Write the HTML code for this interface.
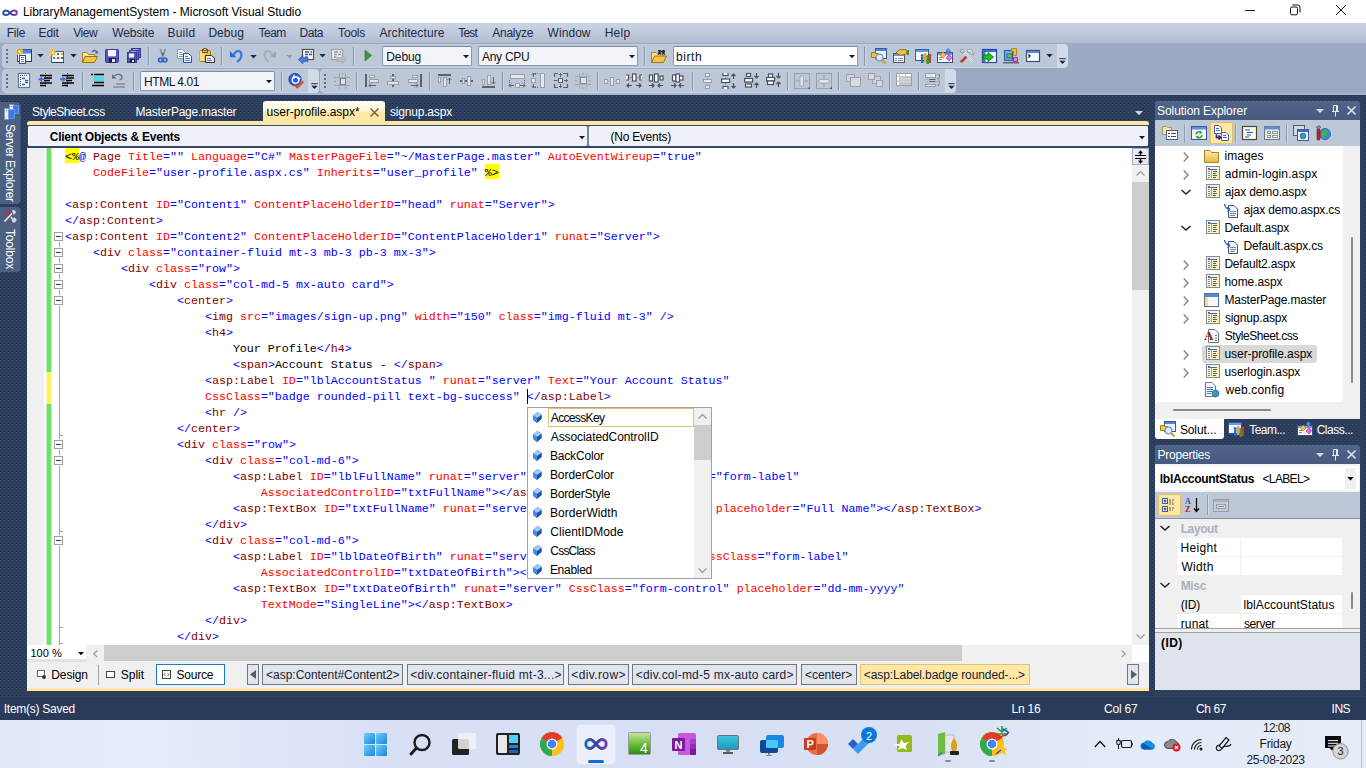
<!DOCTYPE html>
<html lang="en">
<head>
<meta charset="utf-8">
<title>LibraryManagementSystem - Microsoft Visual Studio</title>
<style>
html,body{margin:0;padding:0;}
body{width:1366px;height:768px;overflow:hidden;position:relative;background:#2b3b5a;font-family:"Liberation Sans",sans-serif;font-size:12px;line-height:16px;color:#000;}
div,span,svg,pre{position:absolute;box-sizing:border-box;}
span{white-space:pre;}
.t{font:12px/16px "Liberation Sans",sans-serif;color:#000;}
.w{color:#fff;}
.b{font-weight:bold !important;}
.i{overflow:visible;}

.m{font:12px/16px "Liberation Sans",sans-serif;color:#1b2a45;top:25px;}

.ts{background:#bcc7d8;border-radius:5px 0 0 5px;box-shadow:inset 0 1px 0 #c4cddd, inset 1px 0 0 #c4cddd, inset 0 -1px 0 #c9d2e2;}
.to{background:#d3dae7;border-radius:0 4px 4px 0;}
.cb{background:#f2f4f9;border:1px solid #8a96ad;border-top-color:#7d899f;border-radius:2px;}
.sep{width:1px;background:#8593ad;box-shadow:1px 0 0 #cfd7e4;}
.ct{font:12px/16px "Liberation Sans",sans-serif;color:#0c1222;}

.tab{font:12px/16px "Liberation Sans",sans-serif;color:#fff;top:104px;}
.c{font:11.667px/16px "Liberation Mono",monospace;letter-spacing:0;color:#000;left:65px;margin:0;white-space:pre;}
.c b{font-weight:normal;color:#0000ff;}
.c i{font-style:normal;color:#ff0000;}
.c u{text-decoration:none;color:#800000;}
.c s{text-decoration:none;color:#000;}
.ob{width:9px;height:9px;border:1px solid #a0a0a0;background:#fff;left:54px;}
.ob:after{content:"";position:absolute;left:1px;top:3px;width:5px;height:1px;background:#404040;}
.sb{background:#f0f0f0;}
.th{background:#cdcdcd;}
.vb{font:12px/16px "Liberation Sans",sans-serif;color:#000;top:667px;}
.bc{top:664px;height:21px;border:1px solid #70757f;background:#e1e5ee;font:12px/18px "Liberation Sans",sans-serif;color:#1a2133;padding:0 0 0 4px;white-space:pre;overflow:hidden;}
.ac li{position:absolute;left:22px;font:12px/16px "Liberation Sans",sans-serif;color:#000;white-space:pre;list-style:none;}
.ac ul{margin:0;padding:0;}

.pt{font:12px/16px "Liberation Sans",sans-serif;color:#fff;}
.tr{font:12px/16px "Liberation Sans",sans-serif;color:#000;}
.pg{font:12px/16px "Liberation Sans",sans-serif;color:#000;}

.st{font:12px/16px "Liberation Sans",sans-serif;color:#fff;top:701px;}
.ck{font:12px/16px "Liberation Sans",sans-serif;color:#1a1a1a;}
</style>
</head>
<body>
<!-- s_frame -->
<svg class="i" style="left:0;top:0" width="1366" height="768"><defs><pattern id="dots" width="4" height="4" patternUnits="userSpaceOnUse"><rect width="4" height="4" fill="#2c3c5b"/><rect x="0" y="0" width="1" height="1" fill="#3a4e70"/><rect x="2" y="2" width="1" height="1" fill="#3a4e70"/><rect x="2" y="1" width="1" height="1" fill="#273552"/><rect x="0" y="3" width="1" height="1" fill="#273552"/></pattern></defs><rect x="0" y="95" width="1366" height="625" fill="url(#dots)" shape-rendering="crispEdges"/></svg>
<div style="left:0px;top:0px;width:1366px;height:23px;background:#ffffff;"></div>
<svg class="i" style="left:2px;top:8px;" width="16" height="9" viewBox="0 0 16 9"><defs><linearGradient id="vsg" x1="0" x2="1"><stop offset="0" stop-color="#1c5fa8"/><stop offset=".5" stop-color="#3a3f9e"/><stop offset="1" stop-color="#7a3fb0"/></linearGradient></defs><path d="M8 4.800C6.500 3.100 5.300 2.500 4 2.500 2.300 2.500 1.200 3.500 1.200 4.800S2.300 7.100 4 7.100C5.300 7.100 6.500 6.500 8 4.800S10.700 2.500 12 2.500C13.700 2.500 14.800 3.500 14.800 4.800S13.700 7.100 12 7.100C10.700 7.100 9.500 6.500 8 4.800Z" fill="none" stroke="url(#vsg)" stroke-width="2"/></svg>
<span class="t" style="left:22.9px;top:4px;letter-spacing:-0.02px;color:#000;">LibraryManagementSystem - Microsoft Visual Studio</span>
<svg class="i" style="left:1238px;top:0px;" width="120" height="23" viewBox="0 0 120 23"><path d="M7.200 10.500H17" stroke="#111" stroke-width="1" fill="none"/><rect x="52.500" y="7" width="7" height="7.800" rx="1.600" stroke="#111" stroke-width="1" fill="none"/><path d="M54.500 5H59.800a2.200 2.200 0 0 1 2.200 2.200V12.500" stroke="#111" stroke-width="1" fill="none"/><path d="M98 5l10 10M108 5l-10 10" stroke="#111" stroke-width="1" fill="none"/></svg>
<div style="left:0px;top:23px;width:1366px;height:20px;background:linear-gradient(#cad3e3,#c3ccde 40%,#b8c3d7 75%,#b2bdd3);"></div>
<span class="m" style="left:6.7px;top:25px;letter-spacing:-0.20px;">File</span>
<span class="m" style="left:38.6px;top:25px;letter-spacing:-0.15px;">Edit</span>
<span class="m" style="left:73.3px;top:25px;letter-spacing:-0.46px;">View</span>
<span class="m" style="left:112.3px;top:25px;letter-spacing:-0.17px;">Website</span>
<span class="m" style="left:167.4px;top:25px;letter-spacing:0.27px;">Build</span>
<span class="m" style="left:208.4px;top:25px;letter-spacing:0.06px;">Debug</span>
<span class="m" style="left:258.4px;top:25px;letter-spacing:-0.46px;">Team</span>
<span class="m" style="left:299.6px;top:25px;letter-spacing:-0.47px;">Data</span>
<span class="m" style="left:338.1px;top:25px;letter-spacing:-0.19px;">Tools</span>
<span class="m" style="left:379.4px;top:25px;letter-spacing:0.09px;">Architecture</span>
<span class="m" style="left:458.2px;top:25px;letter-spacing:-0.77px;">Test</span>
<span class="m" style="left:492.3px;top:25px;letter-spacing:-0.26px;">Analyze</span>
<span class="m" style="left:547.6px;top:25px;letter-spacing:0.05px;">Window</span>
<span class="m" style="left:604.7px;top:25px;letter-spacing:0.24px;">Help</span>
<div style="left:0px;top:43px;width:1366px;height:52px;background:#9ba9c3;"></div>
<div style="left:0px;top:93px;width:1366px;height:2px;background:#a8b5cf;"></div>
<!-- s_toolbar -->
<div class="ts" style="left:2px;top:44px;width:1055px;height:24px;"></div>
<div class="to" style="left:1057px;top:44px;width:11px;height:24px;"></div>
<svg class="i" style="left:1059px;top:58px;" width="7" height="6" viewBox="0 0 7 6"><rect x="0.300" y="0.200" width="6.400" height="1" fill="#1b2a45"/><path d="M0.300 2.700H6.700L3.500 5.900Z" fill="#1b2a45"/></svg>
<svg class="i" style="left:6px;top:49px;" width="2" height="16" viewBox="0 0 2 16"><rect x="0" y="0" width="2" height="2" fill="#5d6c8a"/><rect x="0" y="4" width="2" height="2" fill="#5d6c8a"/><rect x="0" y="8" width="2" height="2" fill="#5d6c8a"/><rect x="0" y="12" width="2" height="2" fill="#5d6c8a"/></svg>
<svg class="i" style="left:16px;top:48px;" width="16" height="16" viewBox="0 0 16 16"><rect x="1.5" y="1.5" width="14" height="12" fill="#eef2fc" stroke="#3c4f7a" stroke-width="1"/><rect x="2" y="2" width="13" height="3" fill="#4c84e0"/><rect x="2" y="5" width="13" height="1" fill="#9cbcf0"/><path d="M15.500 2V13.500H2" fill="none" stroke="#2c3a58" stroke-width="1"/><rect x="3.5" y="7.5" width="6" height="8" fill="#ffffff" stroke="#3f5078" stroke-width="1"/><path d="M5 9.500H8M5 11.500H8M5 13.500H8" fill="none" stroke="#4a7fe0" stroke-width="1"/><rect x="0" y="0" width="7" height="7" fill="#f7dc6a" rx="1" opacity="0.550"/><path d="M3.5 0V7M0 3.5H7M1 1L6 6M6 1L1 6" fill="none" stroke="#e6b422" stroke-width="1"/><rect x="2.5" y="2.5" width="2" height="2" fill="#fffbe0"/></svg>
<svg class="i" style="left:37px;top:53.5px;" width="7" height="4" viewBox="0 0 7 4"><path d="M0.300 0H6.700L3.500 3.600Z" fill="#1b2a45"/></svg>
<svg class="i" style="left:49px;top:48px;" width="16" height="16" viewBox="0 0 16 16"><rect x="2.5" y="3.5" width="12" height="11" fill="#f6f8fd" stroke="#4a5878" stroke-width="1"/><rect x="3" y="14" width="12" height="1" fill="#2c3a58"/><rect x="8" y="5" width="2" height="2" fill="#5a5ad8"/><rect x="12" y="5" width="2" height="2" fill="#f0a020"/><rect x="4" y="9" width="2" height="2" fill="#2a8af0"/><rect x="8" y="9" width="2" height="2" fill="#e83020"/><rect x="12" y="9" width="2" height="2" fill="#18a028"/><rect x="0" y="1" width="7" height="7" fill="#f7dc6a" rx="1" opacity="0.550"/><path d="M3.5 1V8M0 4.5H7M1 2L6 7M6 2L1 7" fill="none" stroke="#e6b422" stroke-width="1"/><rect x="2.5" y="3.5" width="2" height="2" fill="#fffbe0"/></svg>
<svg class="i" style="left:70px;top:53.5px;" width="7" height="4" viewBox="0 0 7 4"><path d="M0.300 0H6.700L3.500 3.600Z" fill="#1b2a45"/></svg>
<svg class="i" style="left:82px;top:49px;" width="16" height="16" viewBox="0 0 16 16"><path d="M0.500 13.500V3.500H5L6.500 5.500H12.500V7.500" fill="#f9e39a" stroke="#a8842a" stroke-width="1"/><path d="M0.500 13.500L3 7.500H15.500L12.500 13.500Z" fill="#f3c445" stroke="#9a7218" stroke-width="1"/><path d="M10 3C11.500 0.800 14 1 15 3.500" fill="none" stroke="#3a66b0" stroke-width="1.3"/><path d="M15.800 1.500V4.500H12.800Z" fill="#3a66b0"/></svg>
<svg class="i" style="left:104px;top:48px;" width="16" height="16" viewBox="0 0 16 16"><rect x="1.5" y="1.5" width="13" height="13" fill="#5652c4" stroke="#3a3896" stroke-width="1" rx="1"/><rect x="4" y="2" width="8" height="6" fill="#f6f7ff"/><rect x="4" y="8" width="8" height="1" fill="#8a88e0"/><rect x="5" y="10" width="7" height="4.5" fill="#1c1c3c"/><rect x="8" y="11" width="3" height="3" fill="#e6e6f0"/></svg>
<svg class="i" style="left:126px;top:48px;" width="16" height="16" viewBox="0 0 16 16"><rect x="5.5" y="0.5" width="9" height="9" fill="#6a66d0" stroke="#3a3896" stroke-width="1"/><rect x="7" y="1.5" width="5" height="1.5" fill="#f0f0ff"/><rect x="3.5" y="2.5" width="9" height="9" fill="#6a66d0" stroke="#3a3896" stroke-width="1"/><rect x="5" y="3.5" width="5" height="1.5" fill="#f0f0ff"/><rect x="1.5" y="4.5" width="9" height="10" fill="#5652c4" stroke="#3a3896" stroke-width="1"/><rect x="3" y="5.5" width="5" height="4" fill="#f6f7ff"/><rect x="4" y="11" width="5" height="3.5" fill="#1c1c3c"/><rect x="6" y="12" width="2" height="2" fill="#e0e0ea"/></svg>
<div class="sep" style="left:148px;top:47px;height:18px"></div>
<svg class="i" style="left:154px;top:48px;" width="16" height="16" viewBox="0 0 16 16"><path d="M6.300 1L9.300 9.500M11.300 1L8.300 9.500" fill="none" stroke="#8a94a2" stroke-width="1.9"/><path d="M7.500 5L8.800 8.500 10 5Z" fill="#5a6270"/><circle cx="6.5" cy="12" r="1.9" fill="none" stroke="#2f66c8" stroke-width="1.7"/><circle cx="11" cy="12" r="1.9" fill="none" stroke="#2f66c8" stroke-width="1.7"/></svg>
<svg class="i" style="left:177px;top:48px;" width="16" height="16" viewBox="0 0 16 16"><path d="M0.500 1.500H5.500L8.500 4.500V10.500H0.500Z" fill="#ffffff" stroke="#8a9ab8" stroke-width="1"/><path d="M2 4.500H5M2 6.500H7M2 8.500H7" fill="none" stroke="#6aa0e8" stroke-width="1"/><path d="M6.500 5.500H11.500L14.500 8.500V14.500H6.500Z" fill="#ffffff" stroke="#2c4c9a" stroke-width="1"/><path d="M8 8.500H11M8 10.500H13M8 12.500H13" fill="none" stroke="#3a80e0" stroke-width="1"/></svg>
<svg class="i" style="left:199px;top:48px;" width="16" height="16" viewBox="0 0 16 16"><rect x="0.5" y="2.5" width="11" height="11" fill="#f0c040" stroke="#9a7418" stroke-width="1" rx="1"/><path d="M0.5 3H5V13H0.5Z" fill="#fbe08a" stroke="none" stroke-width="1"/><rect x="3.5" y="1.5" width="5" height="3" fill="#d8c080" stroke="#6e5a20" stroke-width="1"/><rect x="5" y="0.5" width="2" height="2" fill="#e8d8a0" stroke="#6e5a20" stroke-width="1"/><path d="M6.500 7.500H12.500L15.500 10V14.500H6.500Z" fill="#e8ecf4" stroke="#3a3028" stroke-width="1"/><path d="M8 10.500H12M8 12.500H13" fill="none" stroke="#6a7690" stroke-width="1"/></svg>
<div class="sep" style="left:221px;top:47px;height:18px"></div>
<svg class="i" style="left:229px;top:48px;" width="16" height="16" viewBox="0 0 16 16"><path d="M4.500 7.500C6 3.500 9.500 1.500 11.500 4 13.500 6.500 12 11 9 13.200" fill="none" stroke="#3a7ae8" stroke-width="2.3" stroke-linecap="round"/><path d="M1 3V9.300H7.300Z" fill="#2a68dc"/></svg>
<svg class="i" style="left:250.3px;top:54.5px;" width="7" height="4" viewBox="0 0 7 4"><path d="M0.300 0H6.700L3.500 3.600Z" fill="#1b2a45"/></svg>
<svg class="i" style="left:261px;top:48px;" width="16" height="16" viewBox="0 0 16 16"><path d="M11.500 7.500C10 3.500 6.500 1.500 4.500 4 2.500 6.500 4 11 7 13.200" fill="none" stroke="#aab0ba" stroke-width="2.3" stroke-linecap="round"/><path d="M15 3V9.300H8.700Z" fill="#a0a6b0"/></svg>
<svg class="i" style="left:285.7px;top:54.5px;" width="7" height="4" viewBox="0 0 7 4"><path d="M0.300 0H6.700L3.500 3.600Z" fill="#8f9aae"/></svg>
<svg class="i" style="left:298px;top:48px;" width="16" height="16" viewBox="0 0 16 16"><rect x="4.5" y="1.5" width="11" height="10" fill="#fffef2" stroke="#5a5040" stroke-width="1.2"/><path d="M7 4H11M12.500 4H14M7 6.500H10M11 6.500H14M7 9H9.500" fill="none" stroke="#2a48e8" stroke-width="1.4"/><path d="M0.300 11.500L5 7V9.500H10V13.500H5V16Z" fill="#3c7ae4" stroke="#2450b0" stroke-width="0.6"/></svg>
<svg class="i" style="left:318.7px;top:53.5px;" width="7" height="4" viewBox="0 0 7 4"><path d="M0.300 0H6.700L3.500 3.600Z" fill="#1b2a45"/></svg>
<svg class="i" style="left:331px;top:48px;" width="16" height="16" viewBox="0 0 16 16"><rect x="0.5" y="1.5" width="11" height="10" fill="#eceef0" stroke="#9a9ea6" stroke-width="1.2"/><path d="M3 4H7M8.500 4H10M3 6.500H6M7 6.500H10M3 9H5.500" fill="none" stroke="#8a8f98" stroke-width="1.4"/><path d="M15.700 11.500L11 7V9.500H6V13.500H11V16Z" fill="#b8bcc2" stroke="#9a9ea6" stroke-width="0.6"/></svg>
<div class="sep" style="left:353px;top:47px;height:18px"></div>
<svg class="i" style="left:360px;top:48px;" width="16" height="16" viewBox="0 0 16 16"><path d="M5 2L11.500 7.500 5 13Z" fill="#3a9a32" stroke="#2a7a22" stroke-width="0.6"/></svg>
<div class="cb" style="left:382px;top:46px;width:90px;height:20px;"></div><span class="ct" style="left:386.3px;top:49px;letter-spacing:-0.12px;">Debug</span><svg class="i" style="left:463px;top:55px;" width="6" height="3" viewBox="0 0 6 3"><path d="M0 0H6L3 3.300Z" fill="#10182c"/></svg>
<div class="cb" style="left:478px;top:46px;width:160px;height:20px;"></div><span class="ct" style="left:482.0px;top:49px;letter-spacing:-0.28px;">Any CPU</span><svg class="i" style="left:629px;top:55px;" width="6" height="3" viewBox="0 0 6 3"><path d="M0 0H6L3 3.300Z" fill="#10182c"/></svg>
<div class="sep" style="left:644px;top:47px;height:18px"></div>
<svg class="i" style="left:651px;top:48px;" width="16" height="16" viewBox="0 0 16 16"><path d="M0.500 14.500V4.500H5L6.500 6H11.500V8" fill="#f9e39a" stroke="#a8842a" stroke-width="1"/><path d="M0.500 14.500L3.500 8H15.500L12.500 14.500Z" fill="#f3c445" stroke="#9a7218" stroke-width="1"/><path d="M8.500 2V7M12.500 2V7" fill="none" stroke="#2a2a2a" stroke-width="2.6"/><path d="M9.500 3.500H11.500" fill="none" stroke="#2a2a2a" stroke-width="1.5"/><path d="M8.500 6V7M12.500 6V7" fill="none" stroke="#9a9a9a" stroke-width="1.4"/></svg>
<div class="cb" style="left:673px;top:46px;width:185px;height:20px;background:#fff;"></div><span class="ct" style="left:675.9px;top:49px;letter-spacing:0.58px;">birth</span><svg class="i" style="left:849px;top:55px;" width="6" height="3" viewBox="0 0 6 3"><path d="M0 0H6L3 3.300Z" fill="#10182c"/></svg>
<div class="sep" style="left:864px;top:47px;height:18px"></div>
<svg class="i" style="left:871px;top:48px;" width="16" height="16" viewBox="0 0 16 16"><rect x="4.5" y="0.5" width="11" height="10" fill="#eef2fc" stroke="#3c5a96" stroke-width="1"/><rect x="5" y="1" width="10" height="2" fill="#4c84e0"/><path d="M0.500 9.500V4.500H3.500L4.500 5.500H7.500V9.500Z" fill="#f3c649" stroke="#a87b1d" stroke-width="1"/><circle cx="8.5" cy="9.5" r="3.3" fill="#d8f0ff" stroke="#7a98c0" stroke-width="1.2"/><path d="M11 12L14.500 15.500" fill="none" stroke="#d89a28" stroke-width="2.2"/></svg>
<svg class="i" style="left:893px;top:48px;" width="16" height="16" viewBox="0 0 16 16"><rect x="0.5" y="5.5" width="11" height="9" fill="#f8fafd" stroke="#4a5468" stroke-width="1"/><rect x="1" y="6" width="10" height="2" fill="#6a9ae8"/><path d="M2 10.500H4M5 10.500H10M2 12.500H4M5 12.500H10" fill="none" stroke="#7a8aa8" stroke-width="1"/><path d="M3 5L6 2 13 1.500 14 5.500 8 7.500Z" fill="#f0c040" stroke="#8a6414" stroke-width="0.8"/><rect x="14" y="2" width="2" height="5" fill="#2a9a3a"/></svg>
<svg class="i" style="left:915px;top:48px;" width="16" height="16" viewBox="0 0 16 16"><rect x="0.5" y="1.5" width="13" height="11" fill="#f6f8fd" stroke="#3c5a96" stroke-width="1"/><rect x="1" y="2" width="12" height="2" fill="#6a9ae8"/><rect x="6" y="9" width="2.5" height="6" fill="#2a6ae0"/><circle cx="7.2" cy="7.5" r="1.5" fill="#2a6ae0"/><rect x="9" y="8" width="2.5" height="6" fill="#f0a020"/><circle cx="10.2" cy="6.5" r="1.5" fill="#f0a020"/><rect x="11.5" y="10" width="2.5" height="6" fill="#2aa02a"/><circle cx="12.7" cy="8.5" r="1.5" fill="#2aa02a"/><rect x="14" y="9" width="2" height="6" fill="#e03030"/><circle cx="15" cy="7.5" r="1.4" fill="#e03030"/></svg>
<svg class="i" style="left:937px;top:48px;" width="16" height="16" viewBox="0 0 16 16"><rect x="0.5" y="4.5" width="15" height="10" fill="#f7f9fd" stroke="#3c5078" stroke-width="1"/><rect x="1" y="5" width="14" height="2" fill="#6a9ae8"/><path d="M2 9.500H6M2 11.500H5" fill="none" stroke="#7a8bb0" stroke-width="1"/><path d="M3 7L6 4 9 7 6 10Z" fill="#f0c040" stroke="#a07818" stroke-width="0.6"/><path d="M9 3L11 0.500 13.500 3 11.500 5.500Z" fill="#4a9ae8" stroke="#2a5ab0" stroke-width="0.6"/><path d="M9 10L12 6.500 15 9.500 12 13Z" fill="#e868e0" stroke="#9030a0" stroke-width="0.6"/></svg>
<svg class="i" style="left:959px;top:48px;" width="16" height="16" viewBox="0 0 16 16"><path d="M1 13.500L3 14.500 9 8.500 7.500 7Z" fill="#e03028" stroke="#a01818" stroke-width="0.5"/><path d="M4 3L14 14" fill="none" stroke="#f4f6f8" stroke-width="2.4"/><path d="M4 3L14 14" fill="none" stroke="#8a94a4" stroke-width="0.8"/><path d="M8 2.500C10 0.500 12.500 1 13.500 3.500L14.500 6.500 12.500 6 11 4 9 4.500Z" fill="#dfe3ea" stroke="#7a8494" stroke-width="0.7"/><path d="M1 2.500L3 0.800 5.500 3 4 5 2 4.500Z" fill="#c8ced8" stroke="#7a8494" stroke-width="0.7"/></svg>
<svg class="i" style="left:982px;top:48px;" width="16" height="16" viewBox="0 0 16 16"><rect x="0.5" y="1.5" width="14" height="13" fill="#f4f7fd" stroke="#2a4a9a" stroke-width="1.2"/><rect x="1" y="2" width="13" height="2" fill="#3a6ae0"/><rect x="1" y="4" width="2.5" height="10" fill="#4a7ae0"/><path d="M1 7H6V4.500L11.500 9 6 13.500V11H1Z" fill="#10c818" stroke="#0a6a0a" stroke-width="0.8"/></svg>
<svg class="i" style="left:1003px;top:48px;" width="16" height="16" viewBox="0 0 16 16"><rect x="1.5" y="2.5" width="8" height="10" fill="#6ab0f0" stroke="#2a68b8" stroke-width="1.2"/><rect x="4" y="6" width="5" height="4" fill="#6ab868" stroke="#4a6a48" stroke-width="1"/><path d="M8.500 0.500H13.500V7.500H10.500V3.500H8.500Z" fill="#f0c030" stroke="#a07818" stroke-width="0.8"/><rect x="10.5" y="9.5" width="4" height="4" fill="#f080e8" stroke="#b030b0" stroke-width="1"/><rect x="0" y="14" width="16" height="1.5" fill="#6a6a6a"/></svg>
<svg class="i" style="left:1026px;top:48px;" width="16" height="16" viewBox="0 0 16 16"><rect x="0.5" y="2.5" width="13" height="11" fill="#f4f7fd" stroke="#3c5078" stroke-width="1.2"/><rect x="1" y="3" width="12" height="2" fill="#5a8ae8"/><path d="M2.500 6.500L4 8 2.500 9.500" fill="none" stroke="#000" stroke-width="1.2"/></svg>
<svg class="i" style="left:1045.7px;top:53.7px;" width="7" height="4" viewBox="0 0 7 4"><path d="M0.300 0H6.700L3.500 3.600Z" fill="#1b2a45"/></svg>
<div class="ts" style="left:2px;top:69px;width:306px;height:24px;"></div>
<div class="to" style="left:308px;top:69px;width:11px;height:24px;"></div>
<svg class="i" style="left:311px;top:83px;" width="7" height="6" viewBox="0 0 7 6"><rect x="0.300" y="0.200" width="6.400" height="1" fill="#1b2a45"/><path d="M0.300 2.700H6.700L3.500 5.900Z" fill="#1b2a45"/></svg>
<svg class="i" style="left:6px;top:74px;" width="2" height="16" viewBox="0 0 2 16"><rect x="0" y="0" width="2" height="2" fill="#5d6c8a"/><rect x="0" y="4" width="2" height="2" fill="#5d6c8a"/><rect x="0" y="8" width="2" height="2" fill="#5d6c8a"/><rect x="0" y="12" width="2" height="2" fill="#5d6c8a"/></svg>
<div class="ts" style="left:320px;top:69px;width:625px;height:24px;"></div>
<div class="to" style="left:945px;top:69px;width:11px;height:24px;"></div>
<svg class="i" style="left:948px;top:83px;" width="7" height="6" viewBox="0 0 7 6"><rect x="0.300" y="0.200" width="6.400" height="1" fill="#1b2a45"/><path d="M0.300 2.700H6.700L3.500 5.900Z" fill="#1b2a45"/></svg>
<svg class="i" style="left:324px;top:74px;" width="2" height="16" viewBox="0 0 2 16"><rect x="0" y="0" width="2" height="2" fill="#5d6c8a"/><rect x="0" y="4" width="2" height="2" fill="#5d6c8a"/><rect x="0" y="8" width="2" height="2" fill="#5d6c8a"/><rect x="0" y="12" width="2" height="2" fill="#5d6c8a"/></svg>
<svg class="i" style="left:16px;top:73px;" width="16" height="16" viewBox="0 0 16 16"><rect x="2.5" y="0.5" width="11" height="14" fill="#f8fafd" stroke="#6a7894" stroke-width="1.2"/><path d="M4 2.500H12" fill="none" stroke="#4a5468" stroke-width="1" stroke-dasharray="1 1"/><path d="M4.500 4V13" fill="none" stroke="#4a5468" stroke-width="1" stroke-dasharray="1 1"/><path d="M6 5.500H9M9 7.500H12M9 9.500H12M6 11.500H9" fill="none" stroke="#2a60e0" stroke-width="1.3"/></svg>
<svg class="i" style="left:38px;top:73px;" width="16" height="16" viewBox="0 0 16 16"><path d="M2 2.500H14M6 5H14M6 7.500H12M2 10H14M2 12.500H8" fill="none" stroke="#000" stroke-width="1.3"/><path d="M7.500 0V15" fill="none" stroke="#000" stroke-width="1" stroke-dasharray="1 1.500"/><path d="M0 6.200L4 3.500V5.200H6.500V7.200H4V9Z" fill="#3a70e0"/></svg>
<svg class="i" style="left:60px;top:73px;" width="16" height="16" viewBox="0 0 16 16"><path d="M2 2.500H14M6 5H14M6 7.500H12M2 10H14M2 12.500H8" fill="none" stroke="#000" stroke-width="1.3"/><path d="M7.500 0V15" fill="none" stroke="#000" stroke-width="1" stroke-dasharray="1 1.500"/><path d="M6.500 6.200L2.500 3.500V5.200H0V7.200H2.500V9Z" fill="#3a70e0"/></svg>
<svg class="i" style="left:90px;top:73px;" width="16" height="16" viewBox="0 0 16 16"><path d="M1 1.500H3M4 1.500H14M4 9.500H14M2 12.500H14" fill="none" stroke="#000" stroke-width="1.4"/><path d="M4 4.500H14M4 7H14" fill="none" stroke="#00f0f8" stroke-width="1.4"/></svg>
<svg class="i" style="left:111px;top:73px;" width="16" height="16" viewBox="0 0 16 16"><path d="M3.500 3C6 0.500 10.500 1 11 4 11 5.500 10 6.500 8.500 7" fill="none" stroke="#6a7078" stroke-width="1.3"/><path d="M1 1V5.500H5.500Z" fill="#6a7078"/><path d="M5 8.500H14" fill="none" stroke="#c8ccd2" stroke-width="1"/><path d="M5 11H14M2 14H14" fill="none" stroke="#6a7078" stroke-width="1.2"/></svg>
<svg class="i" style="left:288px;top:73px;" width="16" height="16" viewBox="0 0 16 16"><circle cx="7" cy="6.5" r="6.2" fill="#2a58d0" stroke="#2248b0" stroke-width="0.8"/><circle cx="7.5" cy="7" r="3.3" fill="#2a58d0" stroke="#e8f0ff" stroke-width="1.6"/><path d="M6 1.500V5L4.500 4M6 5L7.500 4M9 5.500H11.500L10.500 4.500M11.500 5.500L10.500 6.500" fill="none" stroke="#fff" stroke-width="1.1"/><path d="M6.500 12L9.500 14.500 15.500 8.500" fill="none" stroke="#e84a20" stroke-width="2"/></svg>
<svg class="i" style="left:334px;top:73px;" width="16" height="16" viewBox="0 0 16 16"><path d="M5.500 0V16M11.500 0V16M0 4.500H16M0 12.500H16" fill="none" stroke="#a0a4ac" stroke-width="1"/><rect x="6.5" y="5.5" width="5" height="6" fill="#e0e2e6" stroke="#7a7e86" stroke-width="1"/><path d="M7.500 0.500H9.500L8.500 2ZM0.500 7.500V9.500L2 8.500Z" fill="#8a8e96"/></svg>
<svg class="i" style="left:365px;top:73px;" width="16" height="16" viewBox="0 0 16 16"><rect x="0" y="1" width="2" height="13" fill="#5c626e"/><rect x="4.5" y="2.5" width="5" height="2" fill="#e4e6ea" stroke="#9a9ea6" stroke-width="1"/><rect x="4.5" y="6.5" width="9" height="3" fill="#e4e6ea" stroke="#9a9ea6" stroke-width="1"/><path d="M4 12.500H11M6 10.500L4 12.500 6 14.500" fill="none" stroke="#5c626e" stroke-width="1"/></svg>
<svg class="i" style="left:387px;top:73px;" width="16" height="16" viewBox="0 0 16 16"><rect x="5" y="1" width="2" height="13" fill="#5c626e"/><rect x="3.5" y="3.5" width="5" height="2" fill="#e4e6ea" stroke="#9a9ea6" stroke-width="1"/><rect x="0.5" y="8.5" width="11" height="3" fill="#e4e6ea" stroke="#9a9ea6" stroke-width="1"/></svg>
<svg class="i" style="left:408px;top:73px;" width="16" height="16" viewBox="0 0 16 16"><rect x="12" y="1" width="2" height="13" fill="#5c626e"/><rect x="4.5" y="2.5" width="5" height="2" fill="#e4e6ea" stroke="#9a9ea6" stroke-width="1"/><rect x="0.5" y="6.5" width="9" height="3" fill="#e4e6ea" stroke="#9a9ea6" stroke-width="1"/><path d="M3 12.500H10M8 10.500L10 12.500 8 14.500" fill="none" stroke="#5c626e" stroke-width="1"/></svg>
<svg class="i" style="left:438px;top:73px;" width="16" height="16" viewBox="0 0 16 16"><rect x="0" y="1" width="13" height="2" fill="#5c626e"/><rect x="0.5" y="4.5" width="2" height="5" fill="#e4e6ea" stroke="#9a9ea6" stroke-width="1"/><rect x="5.5" y="4.5" width="3" height="9" fill="#e4e6ea" stroke="#9a9ea6" stroke-width="1"/><path d="M11.500 5V11M9.500 7L11.500 5 13.500 7" fill="none" stroke="#5c626e" stroke-width="1"/></svg>
<svg class="i" style="left:460px;top:73px;" width="16" height="16" viewBox="0 0 16 16"><rect x="0" y="7" width="13" height="2" fill="#5c626e"/><rect x="2.5" y="5.5" width="2" height="5" fill="#e4e6ea" stroke="#9a9ea6" stroke-width="1"/><rect x="7.5" y="3.5" width="3" height="9" fill="#e4e6ea" stroke="#9a9ea6" stroke-width="1"/></svg>
<svg class="i" style="left:482px;top:73px;" width="16" height="16" viewBox="0 0 16 16"><rect x="0" y="13" width="13" height="2" fill="#5c626e"/><rect x="0.5" y="6.5" width="2" height="5" fill="#e4e6ea" stroke="#9a9ea6" stroke-width="1"/><rect x="5.5" y="2.5" width="3" height="9" fill="#e4e6ea" stroke="#9a9ea6" stroke-width="1"/><path d="M11.500 4V11M9.500 9L11.500 11 13.500 9" fill="none" stroke="#5c626e" stroke-width="1"/></svg>
<svg class="i" style="left:509px;top:73px;" width="16" height="16" viewBox="0 0 16 16"><rect x="1.5" y="1.5" width="14" height="4" fill="#e4e6ea" stroke="#9a9ea6" stroke-width="1"/><path d="M0.500 7V11M15.500 7V11" fill="none" stroke="#5c626e" stroke-width="1" stroke-dasharray="1 1"/><rect x="6.5" y="10.5" width="4" height="4" fill="#e4e6ea" stroke="#9a9ea6" stroke-width="1"/><path d="M0 12.500H5M2 10.500L0 12.500 2 14.500M11 12.500H16M14 10.500L16 12.500 14 14.500" fill="none" stroke="#5c626e" stroke-width="1"/></svg>
<svg class="i" style="left:531px;top:73px;" width="16" height="16" viewBox="0 0 16 16"><rect x="9.5" y="0.5" width="4" height="14" fill="#e4e6ea" stroke="#9a9ea6" stroke-width="1"/><path d="M4 0.500H8M4 14.500H8" fill="none" stroke="#5c626e" stroke-width="1" stroke-dasharray="1 1"/><rect x="0.5" y="5.5" width="4" height="4" fill="#e4e6ea" stroke="#9a9ea6" stroke-width="1"/><path d="M2.500 0V4M0.500 2L2.500 0 4.500 2M2.500 11V15M0.500 13L2.500 15 4.500 13" fill="none" stroke="#5c626e" stroke-width="1"/></svg>
<svg class="i" style="left:554px;top:73px;" width="16" height="16" viewBox="0 0 16 16"><path d="M0.500 4V0.500H4M9 0.500H13.500V4M13.500 11V14.500H9M4 14.500H0.500V11" fill="none" stroke="#5c626e" stroke-width="1.2"/><rect x="4.5" y="5.5" width="4" height="4" fill="#e4e6ea" stroke="#5c626e" stroke-width="1"/><path d="M6.500 0V4M5 2L6.500 0.500 8 2M6.500 11V15M5 13L6.500 14.500 8 13M0 7.500H3.500M10 7.500H14M12 6L13.500 7.500 12 9" fill="none" stroke="#5c626e" stroke-width="1"/></svg>
<svg class="i" style="left:575px;top:73px;" width="16" height="16" viewBox="0 0 16 16"><path d="M4.500 0V16M11.500 0V16M0 3.500H16M0 11.500H16" fill="none" stroke="#a8acb4" stroke-width="1"/><rect x="5" y="4" width="7" height="7" fill="#8a8e96"/><rect x="6" y="5" width="5" height="5" fill="#e0e2e6"/><path d="M7 0.500H9L8 2ZM7 15.500H9L8 14ZM0.500 6.500V8.500L2 7.500ZM15.500 6.500V8.500L14 7.500Z" fill="#8a8e96"/></svg>
<svg class="i" style="left:604px;top:73px;" width="16" height="16" viewBox="0 0 16 16"><path d="M0 8.500H16" fill="none" stroke="#b0b4ba" stroke-width="1"/><rect x="0.5" y="6.5" width="3" height="4" fill="#e8eaee" stroke="#9a9ea6" stroke-width="1"/><rect x="6.5" y="4.5" width="3" height="8" fill="#e8eaee" stroke="#9a9ea6" stroke-width="1"/><rect x="12.5" y="6.5" width="3" height="4" fill="#e8eaee" stroke="#9a9ea6" stroke-width="1"/></svg>
<svg class="i" style="left:626px;top:73px;" width="16" height="16" viewBox="0 0 16 16"><path d="M0 4.500H16" fill="none" stroke="#a0a4ac" stroke-width="1"/><path d="M0 2H2.500V7H0M16 2H14V7H16" fill="#fff" stroke="#4a4f5a" stroke-width="1.2"/><rect x="6.5" y="1" width="3.5" height="7" fill="#fff" stroke="#4a4f5a" stroke-width="1.2"/><path d="M1 12.500H6M3 10.500L1 12.500 3 14.500M10 12.500H15M13 10.500L15 12.500 13 14.500" fill="none" stroke="#4a4f5a" stroke-width="1.2"/></svg>
<svg class="i" style="left:649px;top:73px;" width="16" height="16" viewBox="0 0 16 16"><rect x="0.5" y="2" width="3" height="6" fill="#fff" stroke="#4a4f5a" stroke-width="1.2"/><rect x="5.5" y="1" width="3.5" height="8" fill="#fff" stroke="#4a4f5a" stroke-width="1.2"/><rect x="11" y="3" width="3" height="4" fill="#fff" stroke="#4a4f5a" stroke-width="1.2"/><path d="M0 12.500H5M3 10.500L5 12.500 3 14.500M9 12.500H14M11 10.500L9 12.500 11 14.500" fill="none" stroke="#4a4f5a" stroke-width="1.2"/></svg>
<svg class="i" style="left:672px;top:73px;" width="16" height="16" viewBox="0 0 16 16"><rect x="0.5" y="2" width="3.5" height="6" fill="#fff" stroke="#4a4f5a" stroke-width="1.2"/><rect x="4" y="1" width="3.5" height="8" fill="#fff" stroke="#4a4f5a" stroke-width="1.2"/><rect x="7.5" y="3" width="3.5" height="4" fill="#fff" stroke="#4a4f5a" stroke-width="1.2"/><path d="M-1 12.500H4M2 10.500L4 12.500 2 14.500M7 12.500H12M9 10.500L7 12.500 9 14.500" fill="none" stroke="#4a4f5a" stroke-width="1.2"/></svg>
<svg class="i" style="left:703px;top:73px;" width="16" height="16" viewBox="0 0 16 16"><path d="M4.500 0V16" fill="none" stroke="#b0b4ba" stroke-width="1"/><rect x="2.5" y="0.5" width="4" height="3" fill="#e8eaee" stroke="#9a9ea6" stroke-width="1"/><rect x="0.5" y="6.5" width="8" height="3" fill="#e8eaee" stroke="#9a9ea6" stroke-width="1"/><rect x="2.5" y="12.5" width="4" height="3" fill="#e8eaee" stroke="#9a9ea6" stroke-width="1"/></svg>
<svg class="i" style="left:721px;top:73px;" width="16" height="16" viewBox="0 0 16 16"><path d="M4.500 0V16" fill="none" stroke="#a0a4ac" stroke-width="1"/><path d="M2 0V2.500H7V0M2 16V13.500H7V16" fill="#fff" stroke="#4a4f5a" stroke-width="1.2"/><rect x="0.6" y="6" width="8" height="3.5" fill="#fff" stroke="#4a4f5a" stroke-width="1.2"/><path d="M12.500 1V6M10.500 3L12.500 1 14.500 3M12.500 10V15M10.500 13L12.500 15 14.500 13" fill="none" stroke="#4a4f5a" stroke-width="1.2"/></svg>
<svg class="i" style="left:744px;top:73px;" width="16" height="16" viewBox="0 0 16 16"><rect x="2.5" y="0.5" width="4" height="3" fill="#fff" stroke="#4a4f5a" stroke-width="1.2"/><rect x="0.6" y="5.5" width="8" height="3.5" fill="#fff" stroke="#4a4f5a" stroke-width="1.2"/><rect x="1.5" y="11" width="6" height="3" fill="#fff" stroke="#4a4f5a" stroke-width="1.2"/><path d="M12.500 0V5M10.500 3L12.500 5 14.500 3M12.500 10V15M10.500 12L12.500 10 14.500 12" fill="none" stroke="#4a4f5a" stroke-width="1.2"/></svg>
<svg class="i" style="left:766px;top:73px;" width="16" height="16" viewBox="0 0 16 16"><rect x="2.5" y="1" width="4" height="3.5" fill="#fff" stroke="#4a4f5a" stroke-width="1.2"/><rect x="0.6" y="4.5" width="8" height="3.5" fill="#fff" stroke="#4a4f5a" stroke-width="1.2"/><rect x="1.5" y="8" width="6" height="3.5" fill="#fff" stroke="#4a4f5a" stroke-width="1.2"/><path d="M12.500 0V5M10.500 3L12.500 5 14.500 3M12.500 9V14M10.500 11L12.500 9 14.500 11" fill="none" stroke="#4a4f5a" stroke-width="1.2"/></svg>
<svg class="i" style="left:794px;top:73px;" width="16" height="16" viewBox="0 0 16 16"><rect x="0.5" y="0.5" width="15" height="15" fill="none" stroke="#9a9ea6" stroke-width="1"/><path d="M2 8H14" fill="none" stroke="#a8acb4" stroke-width="1.6"/><rect x="6" y="3" width="3.5" height="10" fill="#e4e6ea" stroke="#9a9ea6" stroke-width="0.8" rx="1"/><rect x="14.5" y="14.5" width="1.5" height="1.5" fill="#2a4a9a"/></svg>
<svg class="i" style="left:816px;top:73px;" width="16" height="16" viewBox="0 0 16 16"><rect x="0.5" y="0.5" width="15" height="15" fill="none" stroke="#9a9ea6" stroke-width="1"/><path d="M8 2V14" fill="none" stroke="#a8acb4" stroke-width="1.6"/><rect x="3" y="6.5" width="10" height="3.5" fill="#e4e6ea" stroke="#9a9ea6" stroke-width="0.8" rx="1"/><rect x="14.5" y="14.5" width="1.5" height="1.5" fill="#2a4a9a"/></svg>
<svg class="i" style="left:846px;top:73px;" width="16" height="16" viewBox="0 0 16 16"><rect x="0.5" y="1.5" width="8" height="7" fill="#d0d2d6" stroke="#a0a4aa" stroke-width="1"/><rect x="4.5" y="4.5" width="10" height="9" fill="#d8dadd" stroke="#9a9ea6" stroke-width="1"/></svg>
<svg class="i" style="left:868px;top:73px;" width="16" height="16" viewBox="0 0 16 16"><rect x="4.5" y="3.5" width="8" height="7" fill="#d0d2d6" stroke="#a0a4aa" stroke-width="1"/><rect x="0.5" y="0.5" width="6" height="6" fill="#d8dadd" stroke="#9a9ea6" stroke-width="1"/><rect x="8.5" y="7.5" width="6" height="6" fill="#d8dadd" stroke="#9a9ea6" stroke-width="1"/></svg>
<svg class="i" style="left:896px;top:73px;" width="16" height="16" viewBox="0 0 16 16"><rect x="0.5" y="0.5" width="15" height="12" fill="#c4c6ca" stroke="#9a9ea6" stroke-width="1"/><rect x="1" y="1" width="2" height="2" fill="#fff"/><rect x="4" y="1" width="5" height="2" fill="#fff"/><rect x="10" y="1" width="5" height="2" fill="#fff"/><rect x="1" y="4" width="2" height="3.5" fill="#fff"/><rect x="1" y="9" width="2" height="3" fill="#fff"/><path d="M4 6H15M4 8.500H15" fill="none" stroke="#e0e2e6" stroke-width="0.8"/></svg>
<svg class="i" style="left:925px;top:73px;" width="16" height="16" viewBox="0 0 16 16"><rect x="0.5" y="0.5" width="10" height="4" fill="#e4e6ea" stroke="#9a9ea6" stroke-width="1"/><rect x="8" y="1" width="1.5" height="3" fill="#fff"/><circle cx="1.5" cy="7.5" r="1.3" fill="#e4e6ea" stroke="#9a9ea6" stroke-width="0.8"/><path d="M4 6.500H10.500M4 8.500H10.500" fill="none" stroke="#5c626e" stroke-width="1"/><rect x="0.5" y="11.5" width="10" height="2" fill="#e4e6ea" stroke="#9a9ea6" stroke-width="1"/><path d="M12.500 1.500H14.500V4L12.500 6H14.500M12.500 8H14.500V10.500L12.500 12.500H14.500" fill="none" stroke="#8a8e96" stroke-width="1"/></svg>
<div class="cb" style="left:140px;top:71px;width:135px;height:20px;"></div><span class="ct" style="left:144.1px;top:74px;letter-spacing:-0.46px;">HTML 4.01</span><svg class="i" style="left:266px;top:80px;" width="6" height="3" viewBox="0 0 6 3"><path d="M0 0H6L3 3.300Z" fill="#10182c"/></svg>
<div class="sep" style="left:82px;top:72px;height:18px"></div>
<div class="sep" style="left:133px;top:72px;height:18px"></div>
<div class="sep" style="left:281px;top:72px;height:18px"></div>
<div class="sep" style="left:356px;top:72px;height:18px"></div>
<div class="sep" style="left:429px;top:72px;height:18px"></div>
<div class="sep" style="left:502px;top:72px;height:18px"></div>
<div class="sep" style="left:597px;top:72px;height:18px"></div>
<div class="sep" style="left:692px;top:72px;height:18px"></div>
<div class="sep" style="left:787px;top:72px;height:18px"></div>
<div class="sep" style="left:838px;top:72px;height:18px"></div>
<div class="sep" style="left:889px;top:72px;height:18px"></div>
<div class="sep" style="left:918px;top:72px;height:18px"></div>
<!-- s_editor -->
<div style="left:0px;top:103px;width:21px;height:100px;background:#3d5277;border-radius:0 3px 3px 0;"></div>
<div style="left:0px;top:208px;width:21px;height:63px;background:#3d5277;border-radius:0 3px 3px 0;"></div>
<div style="left:0px;top:102px;width:20px;height:102px;background:#4d6082;border-radius:0 3px 3px 0;"></div>
<div style="left:0px;top:207px;width:20px;height:65px;background:#4d6082;border-radius:0 3px 3px 0;"></div>
<span class="t w" style="left:18px;top:123.7px;transform-origin:0 0;transform:rotate(90deg);letter-spacing:-0.38px;">Server Explorer</span>
<span class="t w" style="left:18px;top:229.2px;transform-origin:0 0;transform:rotate(90deg);letter-spacing:-0.17px;">Toolbox</span>
<svg class="i" style="left:3px;top:104px;" width="16" height="16" viewBox="0 0 16 16"><rect x="6.500" y="0.500" width="4" height="10" fill="#e8ecf4" stroke="#8a96b0"/><rect x="10" y="1.500" width="5.500" height="8" fill="#3a7ae8" stroke="#8ab0f0" stroke-width="0.600"/><rect x="1.500" y="4.500" width="4" height="11" fill="#e8ecf4" stroke="#8a96b0"/><rect x="5.500" y="5.500" width="6" height="9" fill="#3a7ae8" stroke="#8ab0f0" stroke-width="0.600"/><rect x="3" y="6" width="1" height="1" fill="#3ac040"/><rect x="8" y="2" width="1" height="1" fill="#3ac040"/></svg>
<svg class="i" style="left:3px;top:209px;" width="16" height="16" viewBox="0 0 16 16"><path d="M2 1.500L8 8" stroke="#e02030" stroke-width="2"/><path d="M8 8L12 13" stroke="#e8ecf2" stroke-width="1.600"/><path d="M1.500 12.500L9 4.500" stroke="#f4f6fa" stroke-width="1.300"/><path d="M9 1.500C11 0.500 13 2 12.500 4L10.500 5.500M10.500 9C12.500 8.500 14 10 13 12L10.500 13.500 9 11.500Z" fill="#d8dce4" stroke="#c0c6d0" stroke-width="0.800"/></svg>
<span class="tab" style="left:32.0px;top:104px;letter-spacing:-0.48px;">StyleSheet.css</span>
<span class="tab" style="left:135.6px;top:104px;letter-spacing:-0.23px;">MasterPage.master</span>
<div style="left:263px;top:101px;width:122px;height:21px;background:linear-gradient(#fffdf4,#fff6d8 45%,#ffe8a6 55%,#ffe8a6);border-radius:3px 3px 0 0;"></div>
<span class="tab" style="left:266.6px;top:104px;letter-spacing:-0.02px;color:#000;">user-profile.aspx*</span>
<svg class="i" style="left:370px;top:108px;" width="9" height="9" viewBox="0 0 9 9"><path d="M0.500 0.500L8.500 8.500M8.500 0.500L0.500 8.500" stroke="#75633d" stroke-width="1.500" fill="none"/></svg>
<span class="tab" style="left:389.9px;top:104px;letter-spacing:-0.18px;">signup.aspx</span>
<svg class="i" style="left:1135px;top:111px;" width="8" height="4" viewBox="0 0 8 4"><path d="M0 0H8L4 4.200Z" fill="#ced4df"/></svg>
<div style="left:27px;top:121px;width:1122px;height:5px;background:#ffe8a6;border-radius:3px 3px 0 0;"></div>
<div style="left:27px;top:125px;width:1122px;height:566px;background:#ffe8a6;"></div>
<div style="left:27px;top:125px;width:1122px;height:23px;background:#34466a;"></div>
<div style="left:28px;top:126px;width:559px;height:20px;background:#eff1f8;border-radius:2px;box-shadow:inset 0 0 0 1px #f5f6fa;"></div>
<div style="left:589px;top:126px;width:559px;height:20px;background:#eff1f8;border-radius:2px;box-shadow:inset 0 0 0 1px #f5f6fa;"></div>
<div style="left:587px;top:126px;width:2px;height:20px;background:#7484a0;"></div>
<span class="t b" style="left:49.7px;top:129px;letter-spacing:-0.22px;">Client Objects &amp; Events</span>
<span class="t" style="left:610.6px;top:129px;letter-spacing:-0.28px;">(No Events)</span>
<svg class="i" style="left:579px;top:136px;" width="6" height="3" viewBox="0 0 6 3"><path d="M0 0H6L3 3.300Z" fill="#10182c"/></svg>
<svg class="i" style="left:1139px;top:136px;" width="6" height="3" viewBox="0 0 6 3"><path d="M0 0H6L3 3.300Z" fill="#10182c"/></svg>
<div style="left:27px;top:148px;width:1105px;height:497px;background:#ffffff;"></div>
<div style="left:27px;top:148px;width:17px;height:497px;background:#f0f0f0;"></div>
<div style="left:46px;top:148px;width:6px;height:224px;background:#b9f1b9;"></div>
<div style="left:46px;top:372px;width:6px;height:32px;background:#fff7b3;"></div>
<div style="left:46px;top:404px;width:6px;height:241px;background:#b9f1b9;"></div>
<div style="left:47px;top:148px;width:4px;height:224px;background:#6ce26c;"></div>
<div style="left:47px;top:372px;width:4px;height:32px;background:#ffee62;"></div>
<div style="left:47px;top:404px;width:4px;height:241px;background:#6ce26c;"></div>
<div style="left:59px;top:242px;width:1px;height:5px;background:#a5a5a5;"></div>
<div style="left:59px;top:258px;width:1px;height:5px;background:#a5a5a5;"></div>
<div style="left:59px;top:274px;width:1px;height:5px;background:#a5a5a5;"></div>
<div style="left:59px;top:290px;width:1px;height:5px;background:#a5a5a5;"></div>
<div style="left:59px;top:306px;width:1px;height:133px;background:#a5a5a5;"></div>
<div style="left:59px;top:450px;width:1px;height:5px;background:#a5a5a5;"></div>
<div style="left:59px;top:466px;width:1px;height:69px;background:#a5a5a5;"></div>
<div style="left:59px;top:546px;width:1px;height:99px;background:#a5a5a5;"></div>
<div class="ob" style="top:232px"></div>
<div class="ob" style="top:248px"></div>
<div class="ob" style="top:264px"></div>
<div class="ob" style="top:280px"></div>
<div class="ob" style="top:296px"></div>
<div class="ob" style="top:440px"></div>
<div class="ob" style="top:456px"></div>
<div class="ob" style="top:536px"></div>
<div style="left:60px;top:435px;width:3px;height:1px;background:#a5a5a5;"></div>
<div style="left:60px;top:531px;width:3px;height:1px;background:#a5a5a5;"></div>
<div style="left:60px;top:627px;width:3px;height:1px;background:#a5a5a5;"></div>
<div style="left:60px;top:643px;width:3px;height:1px;background:#a5a5a5;"></div>
<div style="left:65px;top:148px;width:14px;height:15px;background:#ffff00;"></div>
<div style="left:485px;top:164px;width:14px;height:15px;background:#ffff00;"></div>
<pre class="c" style="top:149px"><s>&lt;%</s><b>@</b> <u>Page</u> <i>Title</i><b>=""</b> <i>Language</i><b>="C#"</b> <i>MasterPageFile</i><b>="~/MasterPage.master"</b> <i>AutoEventWireup</i><b>="true"</b></pre>
<pre class="c" style="top:165px">    <i>CodeFile</i><b>="user-profile.aspx.cs"</b> <i>Inherits</i><b>="user_profile"</b> <s>%&gt;</s></pre>
<pre class="c" style="top:197px"><b>&lt;</b><u>asp:Content</u> <i>ID</i><b>="Content1"</b> <i>ContentPlaceHolderID</i><b>="head"</b> <i>runat</i><b>="Server"</b><b>&gt;</b></pre>
<pre class="c" style="top:213px"><b>&lt;/</b><u>asp:Content</u><b>&gt;</b></pre>
<pre class="c" style="top:229px"><b>&lt;</b><u>asp:Content</u> <i>ID</i><b>="Content2"</b> <i>ContentPlaceHolderID</i><b>="ContentPlaceHolder1"</b> <i>runat</i><b>="Server"</b><b>&gt;</b></pre>
<pre class="c" style="top:245px">    <b>&lt;</b><u>div</u> <i>class</i><b>="container-fluid mt-3 mb-3 pb-3 mx-3"</b><b>&gt;</b></pre>
<pre class="c" style="top:261px">        <b>&lt;</b><u>div</u> <i>class</i><b>="row"</b><b>&gt;</b></pre>
<pre class="c" style="top:277px">            <b>&lt;</b><u>div</u> <i>class</i><b>="col-md-5 mx-auto card"</b><b>&gt;</b></pre>
<pre class="c" style="top:293px">                <b>&lt;</b><u>center</u><b>&gt;</b></pre>
<pre class="c" style="top:309px">                    <b>&lt;</b><u>img</u> <i>src</i><b>="images/sign-up.png"</b> <i>width</i><b>="150"</b> <i>class</i><b>="img-fluid mt-3"</b><b> /&gt;</b></pre>
<pre class="c" style="top:325px">                    <b>&lt;</b><u>h4</u><b>&gt;</b></pre>
<pre class="c" style="top:341px">                        Your Profile<b>&lt;/</b><u>h4</u><b>&gt;</b></pre>
<pre class="c" style="top:357px">                        <b>&lt;</b><u>span</u><b>&gt;</b>Account Status - <b>&lt;/</b><u>span</u><b>&gt;</b></pre>
<pre class="c" style="top:373px">                    <b>&lt;</b><u>asp:Label</u> <i>ID</i><b>="lblAccountStatus "</b> <i>runat</i><b>="server"</b> <i>Text</i><b>="Your Account Status"</b><b></b></pre>
<pre class="c" style="top:389px">                    <i>CssClass</i><b>="badge rounded-pill text-bg-success"</b> <b>&lt;/</b><u>asp:Label</u><b>&gt;</b></pre>
<pre class="c" style="top:405px">                    <b>&lt;</b><u>hr</u><b> /&gt;</b></pre>
<pre class="c" style="top:421px">                <b>&lt;/</b><u>center</u><b>&gt;</b></pre>
<pre class="c" style="top:437px">                <b>&lt;</b><u>div</u> <i>class</i><b>="row"</b><b>&gt;</b></pre>
<pre class="c" style="top:453px">                    <b>&lt;</b><u>div</u> <i>class</i><b>="col-md-6"</b><b>&gt;</b></pre>
<pre class="c" style="top:469px">                        <b>&lt;</b><u>asp:Label</u> <i>ID</i><b>="lblFullName"</b> <i>runat</i><b>="server"</b> <i>Text</i><b>="Full Name"</b> <i>CssClass</i><b>="form-label"</b><b></b></pre>
<pre class="c" style="top:485px">                            <i>AssociatedControlID</i><b>="txtFullName"</b><b>&gt;&lt;/</b><u>asp:Label</u><b>&gt;</b></pre>
<pre class="c" style="top:501px">                        <b>&lt;</b><u>asp:TextBox</u> <i>ID</i><b>="txtFullName"</b> <i>runat</i><b>="server"</b> <i>CssClass</i><b>="form-control"</b> <i>placeholder</i><b>="Full Name"</b><b>&gt;&lt;/</b><u>asp:TextBox</u><b>&gt;</b></pre>
<pre class="c" style="top:517px">                    <b>&lt;/</b><u>div</u><b>&gt;</b></pre>
<pre class="c" style="top:533px">                    <b>&lt;</b><u>div</u> <i>class</i><b>="col-md-6"</b><b>&gt;</b></pre>
<pre class="c" style="top:549px">                        <b>&lt;</b><u>asp:Label</u> <i>ID</i><b>="lblDateOfBirth"</b> <i>runat</i><b>="server"</b> <i>Text</i><b>="Date of Birth"</b> <i>CssClass</i><b>="form-label"</b><b></b></pre>
<pre class="c" style="top:565px">                            <i>AssociatedControlID</i><b>="txtDateOfBirth"</b><b>&gt;&lt;/</b><u>asp:Label</u><b>&gt;</b></pre>
<pre class="c" style="top:581px">                        <b>&lt;</b><u>asp:TextBox</u> <i>ID</i><b>="txtDateOfBirth"</b> <i>runat</i><b>="server"</b> <i>CssClass</i><b>="form-control"</b> <i>placeholder</i><b>="dd-mm-yyyy"</b><b></b></pre>
<pre class="c" style="top:597px">                            <i>TextMode</i><b>="SingleLine"</b><b>&gt;&lt;/</b><u>asp:TextBox</u><b>&gt;</b></pre>
<pre class="c" style="top:613px">                    <b>&lt;/</b><u>div</u><b>&gt;</b></pre>
<pre class="c" style="top:629px">                <b>&lt;/</b><u>div</u><b>&gt;</b></pre>
<div style="left:527px;top:389px;width:1px;height:15px;background:#000;"></div>
<div style="left:1132px;top:148px;width:17px;height:497px;background:#f0f0f0;"></div>
<div style="left:1132px;top:148px;width:17px;height:17px;background:#e4e8f0;border:1px solid #a8b0c0;"></div>
<svg class="i" style="left:1135px;top:150px;" width="11" height="14" viewBox="0 0 11 14"><path d="M0 5.500H11M0 8.500H11" stroke="#000" stroke-width="1.200" fill="none"/><path d="M5.500 2V5M5.500 9V12" stroke="#000" stroke-width="1.400" fill="none"/><path d="M3 3.200L5.500 0.300 8 3.200ZM3 10.800L5.500 13.700 8 10.800Z" fill="#000"/></svg>
<svg class="i" style="left:1136px;top:171px;" width="9" height="5" viewBox="0 0 9 5"><path d="M0.500 4.500L4.500 0.500 8.500 4.500" stroke="#9a9a9a" stroke-width="1.200" fill="none"/></svg>
<div style="left:1132px;top:182px;width:17px;height:108px;background:#cdcdcd;"></div>
<svg class="i" style="left:1136px;top:634px;" width="9" height="5" viewBox="0 0 9 5"><path d="M0.500 0.500L4.500 4.500 8.500 0.500" stroke="#9a9a9a" stroke-width="1.200" fill="none"/></svg>
<div style="left:27px;top:645px;width:1122px;height:17px;background:#f0f0f0;"></div>
<div style="left:27px;top:659px;width:60px;height:3px;background:#e2e2e2;"></div>
<div style="left:27px;top:645px;width:59px;height:14px;background:#ffffff;"></div>
<span class="t" style="left:30.5px;top:645px;font-size:11px;">100 %</span>
<svg class="i" style="left:78px;top:652px;" width="6" height="3" viewBox="0 0 6 3"><path d="M0 0H6L3 3.300Z" fill="#000"/></svg>
<svg class="i" style="left:93px;top:650px;" width="5" height="8" viewBox="0 0 5 8"><path d="M4.300 0.500L0.800 3.800 4.300 7.100" stroke="#9a9a9a" stroke-width="1.200" fill="none"/></svg>
<div style="left:104px;top:645px;width:858px;height:16px;background:#cdcdcd;"></div>
<svg class="i" style="left:1121px;top:650px;" width="5" height="8" viewBox="0 0 5 8"><path d="M0.700 0.500L4.200 3.800 0.700 7.100" stroke="#9a9a9a" stroke-width="1.200" fill="none"/></svg>
<div style="left:1132px;top:645px;width:17px;height:17px;background:#ffffff;"></div>
<div style="left:27px;top:662px;width:1122px;height:26px;background:#f0f0f0;"></div>
<div style="left:156px;top:664px;width:69px;height:21px;background:#ffffff;border:1px solid #1979ca;"></div>
<span class="vb" style="left:51.3px;top:667px;letter-spacing:-0.13px;">Design</span>
<span class="vb" style="left:120.7px;top:667px;letter-spacing:0.01px;">Split</span>
<span class="vb" style="left:176.5px;top:667px;letter-spacing:-0.23px;">Source</span>
<div style="left:98px;top:665px;width:1px;height:20px;background:#a0a0a0;"></div>
<svg class="i" style="left:37px;top:670px;" width="10" height="9" viewBox="0 0 10 9"><rect x="0.500" y="0.500" width="7" height="6" fill="#fff" stroke="#666"/><circle cx="7" cy="7" r="2" fill="#333"/></svg>
<svg class="i" style="left:106px;top:671px;" width="9" height="7" viewBox="0 0 9 7"><rect x="0.500" y="0.500" width="8" height="6" fill="#fff" stroke="#444"/></svg>
<svg class="i" style="left:162px;top:670px;" width="9" height="9" viewBox="0 0 9 9"><rect x="0.500" y="0.500" width="8" height="8" fill="#fff" stroke="#444"/><path d="M3.500 3L2 4.500 3.500 6M5.500 3L7 4.500 5.500 6" stroke="#333" fill="none" stroke-width="0.800"/></svg>
<div style="left:247px;top:664px;width:12px;height:21px;background:#e1e5ee;border:1px solid #70757f;"></div>
<svg class="i" style="left:250px;top:670px;" width="6" height="9" viewBox="0 0 6 9"><path d="M6 0V9L0 4.500Z" fill="#5a5a5a"/></svg>
<div style="left:1127px;top:664px;width:12px;height:21px;background:#e1e5ee;border:1px solid #70757f;"></div>
<svg class="i" style="left:1131px;top:670px;" width="6" height="9" viewBox="0 0 6 9"><path d="M0 0V9L6 4.500Z" fill="#5a5a5a"/></svg>
<div class="bc" style="left:262px;width:141px;"></div>
<span class="vb" style="left:266.1px;top:667px;letter-spacing:-0.03px;color:#1a2133;">&lt;asp:Content#Content2&gt;</span>
<div class="bc" style="left:407px;width:157px;"></div>
<span class="vb" style="left:410.3px;top:667px;letter-spacing:0.24px;color:#1a2133;">&lt;div.container-fluid mt-3...&gt;</span>
<div class="bc" style="left:568px;width:61px;"></div>
<span class="vb" style="left:571.3px;top:667px;letter-spacing:0.38px;color:#1a2133;">&lt;div.row&gt;</span>
<div class="bc" style="left:632px;width:165px;"></div>
<span class="vb" style="left:635.7px;top:667px;letter-spacing:0.23px;color:#1a2133;">&lt;div.col-md-5 mx-auto card&gt;</span>
<div class="bc" style="left:801px;width:56px;"></div>
<span class="vb" style="left:804.9px;top:667px;letter-spacing:-0.01px;color:#1a2133;">&lt;center&gt;</span>
<div class="bc" style="left:860px;width:170px;background:#ffe8a6;border-color:#e5c365;"></div>
<span class="vb" style="left:863.8px;top:667px;letter-spacing:-0.10px;color:#1a2133;">&lt;asp:Label.badge rounded-...&gt;</span>
<div style="left:527px;top:407px;width:185px;height:172px;background:#ffffff;border:1px solid #a0a0a0;"></div>
<div style="left:694px;top:408px;width:17px;height:170px;background:#f0f0f0;"></div>
<div style="left:694px;top:425px;width:17px;height:35px;background:#cdcdcd;"></div>
<svg class="i" style="left:698px;top:414px;" width="9" height="5" viewBox="0 0 9 5"><path d="M0.500 4.500L4.500 0.500 8.500 4.500" stroke="#9a9a9a" stroke-width="1.200" fill="none"/></svg>
<svg class="i" style="left:698px;top:568px;" width="9" height="5" viewBox="0 0 9 5"><path d="M0.500 0.500L4.500 4.500 8.500 0.500" stroke="#9a9a9a" stroke-width="1.200" fill="none"/></svg>
<div style="left:548px;top:408px;width:146px;height:19px;background:#ffffff;border:1px solid #e5c365;"></div>
<span class="t" style="left:550.8px;top:410px;letter-spacing:-0.65px;">AccessKey</span>
<svg class="i" style="left:533px;top:412px;" width="9" height="11" viewBox="0 0 9 11"><path d="M4.500 0L8.700 2.800V7L4 11 0.300 8V3.500Z" fill="#1c4fa8"/><path d="M4.500 0L8.700 2.800 4 6 0.300 3.500Z" fill="#9ccaf8"/><path d="M0.300 3.500L4 6V11L0.300 8Z" fill="#4a8ae4"/></svg>
<span class="t" style="left:550.8px;top:429px;letter-spacing:-0.09px;">AssociatedControlID</span>
<svg class="i" style="left:533px;top:431px;" width="9" height="11" viewBox="0 0 9 11"><path d="M4.500 0L8.700 2.800V7L4 11 0.300 8V3.500Z" fill="#1c4fa8"/><path d="M4.500 0L8.700 2.800 4 6 0.300 3.500Z" fill="#9ccaf8"/><path d="M0.300 3.500L4 6V11L0.300 8Z" fill="#4a8ae4"/></svg>
<span class="t" style="left:549.9px;top:448px;letter-spacing:-0.15px;">BackColor</span>
<svg class="i" style="left:533px;top:450px;" width="9" height="11" viewBox="0 0 9 11"><path d="M4.500 0L8.700 2.800V7L4 11 0.300 8V3.500Z" fill="#1c4fa8"/><path d="M4.500 0L8.700 2.800 4 6 0.300 3.500Z" fill="#9ccaf8"/><path d="M0.300 3.500L4 6V11L0.300 8Z" fill="#4a8ae4"/></svg>
<span class="t" style="left:549.9px;top:467px;letter-spacing:-0.05px;">BorderColor</span>
<svg class="i" style="left:533px;top:469px;" width="9" height="11" viewBox="0 0 9 11"><path d="M4.500 0L8.700 2.800V7L4 11 0.300 8V3.500Z" fill="#1c4fa8"/><path d="M4.500 0L8.700 2.800 4 6 0.300 3.500Z" fill="#9ccaf8"/><path d="M0.300 3.500L4 6V11L0.300 8Z" fill="#4a8ae4"/></svg>
<span class="t" style="left:549.9px;top:486px;letter-spacing:-0.22px;">BorderStyle</span>
<svg class="i" style="left:533px;top:488px;" width="9" height="11" viewBox="0 0 9 11"><path d="M4.500 0L8.700 2.800V7L4 11 0.300 8V3.500Z" fill="#1c4fa8"/><path d="M4.500 0L8.700 2.800 4 6 0.300 3.500Z" fill="#9ccaf8"/><path d="M0.300 3.500L4 6V11L0.300 8Z" fill="#4a8ae4"/></svg>
<span class="t" style="left:549.9px;top:505px;letter-spacing:0.08px;">BorderWidth</span>
<svg class="i" style="left:533px;top:507px;" width="9" height="11" viewBox="0 0 9 11"><path d="M4.500 0L8.700 2.800V7L4 11 0.300 8V3.500Z" fill="#1c4fa8"/><path d="M4.500 0L8.700 2.800 4 6 0.300 3.500Z" fill="#9ccaf8"/><path d="M0.300 3.500L4 6V11L0.300 8Z" fill="#4a8ae4"/></svg>
<span class="t" style="left:550.3px;top:524px;letter-spacing:0.04px;">ClientIDMode</span>
<svg class="i" style="left:533px;top:526px;" width="9" height="11" viewBox="0 0 9 11"><path d="M4.500 0L8.700 2.800V7L4 11 0.300 8V3.500Z" fill="#1c4fa8"/><path d="M4.500 0L8.700 2.800 4 6 0.300 3.500Z" fill="#9ccaf8"/><path d="M0.300 3.500L4 6V11L0.300 8Z" fill="#4a8ae4"/></svg>
<span class="t" style="left:550.3px;top:543px;letter-spacing:-0.79px;">CssClass</span>
<svg class="i" style="left:533px;top:545px;" width="9" height="11" viewBox="0 0 9 11"><path d="M4.500 0L8.700 2.800V7L4 11 0.300 8V3.500Z" fill="#1c4fa8"/><path d="M4.500 0L8.700 2.800 4 6 0.300 3.500Z" fill="#9ccaf8"/><path d="M0.300 3.500L4 6V11L0.300 8Z" fill="#4a8ae4"/></svg>
<span class="t" style="left:549.9px;top:562px;letter-spacing:-0.28px;">Enabled</span>
<svg class="i" style="left:533px;top:564px;" width="9" height="11" viewBox="0 0 9 11"><path d="M4.500 0L8.700 2.800V7L4 11 0.300 8V3.500Z" fill="#1c4fa8"/><path d="M4.500 0L8.700 2.800 4 6 0.300 3.500Z" fill="#9ccaf8"/><path d="M0.300 3.500L4 6V11L0.300 8Z" fill="#4a8ae4"/></svg>
<!-- s_right -->
<div style="left:1155px;top:101px;width:205px;height:19px;background:#4d6082;border-radius:3px 3px 0 0;background:linear-gradient(#51648a,#465a7e);"></div>
<span class="pt" style="left:1157.1px;top:103px;letter-spacing:-0.08px;">Solution Explorer</span>
<svg class="i" style="left:1316px;top:109px;" width="8" height="4" viewBox="0 0 8 4"><path d="M0 0H8L4 4Z" fill="#d6dbe5"/></svg>
<svg class="i" style="left:1332px;top:105px;" width="7" height="12" viewBox="0 0 7 12"><path d="M1.500 0.500H5.500M1.500 0.500V6.500M5.500 0.500V6.500M4.500 0.500V6.500M0 6.500H7M3.500 7V11.500" stroke="#e3e7ee" stroke-width="1" fill="none"/></svg>
<svg class="i" style="left:1347px;top:106px;" width="9" height="9" viewBox="0 0 9 9"><path d="M0.500 0.500L8.500 8.500M8.500 0.500L0.500 8.500" stroke="#e3e7ee" stroke-width="1.500" fill="none"/></svg>
<div style="left:1155px;top:120px;width:205px;height:26px;background:#bcc7d8;"></div>
<div style="left:1210px;top:122px;width:23px;height:22px;background:#ffe8a6;border:1px solid #e5c365;border-radius:2px;"></div>
<svg class="i" style="left:1162px;top:125px;" width="16" height="16" viewBox="0 0 16 16"><path d="M0.500 9.500V1.500H4.500L5.500 2.500H9.500V9.500Z" fill="#f4e3a8" stroke="#a89868" stroke-width="1"/><rect x="4.5" y="5.5" width="11" height="9" fill="#ffffff" stroke="#4a5f8a" stroke-width="1"/><path d="M6 8.500H8M9 8.500H14M6 11.500H8M9 11.500H14" fill="none" stroke="#3a4a6a" stroke-width="1.2"/></svg>
<svg class="i" style="left:1191px;top:125px;" width="16" height="16" viewBox="0 0 16 16"><rect x="0.5" y="1.5" width="15" height="13" fill="#f4f7fd" stroke="#3c5a96" stroke-width="1"/><rect x="1" y="2" width="14" height="2.5" fill="#5a90e0"/><path d="M5 9.500C5 7 8 6 10 7.500M11 10C11 12.500 8 13.500 6 12" fill="none" stroke="#3aa028" stroke-width="1.6"/><path d="M9 5.500L11.500 8 8.500 9Z" fill="#3aa028"/><path d="M7 14L4.500 11.500 7.500 10.500Z" fill="#3aa028"/></svg>
<svg class="i" style="left:1213px;top:125px;" width="16" height="16" viewBox="0 0 16 16"><path d="M1.500 0.500H6L8.500 3V8.500H1.500Z" fill="#ffffff" stroke="#4a5f9a" stroke-width="1"/><path d="M3 3.500H6M3 5.500H7" fill="none" stroke="#3a6ad8" stroke-width="1"/><path d="M8.500 7.500H13L15.500 10V15.500H8.500Z" fill="#ffffff" stroke="#4a5f9a" stroke-width="1"/><path d="M10 10.500H13M10 12.500H14" fill="none" stroke="#3a6ad8" stroke-width="1"/><path d="M3.500 9.500V12.500H7M5.500 10.500L7.500 12.500 5.500 14.500" fill="none" stroke="#1a1a9a" stroke-width="1.6"/></svg>
<svg class="i" style="left:1242px;top:125px;" width="16" height="16" viewBox="0 0 16 16"><rect x="0.5" y="1.5" width="14" height="13" fill="#fffdf0" stroke="#4a4436" stroke-width="1.2"/><path d="M3 5H8M5 7.500H11M5 10H9M3 12H7" fill="none" stroke="#2a50d8" stroke-width="1.2"/></svg>
<svg class="i" style="left:1264px;top:125px;" width="16" height="16" viewBox="0 0 16 16"><rect x="0.5" y="1.5" width="15" height="13" fill="#f0ead0" stroke="#6a7898" stroke-width="1"/><rect x="1" y="2" width="14" height="2.5" fill="#5a90e0"/><rect x="3.5" y="6.5" width="3" height="2" fill="#fff" stroke="#8a96b0" stroke-width="1"/><rect x="8.5" y="6.5" width="5" height="2" fill="#fff" stroke="#8a96b0" stroke-width="1"/><rect x="3.5" y="10.5" width="3" height="2" fill="#fff" stroke="#8a96b0" stroke-width="1"/><rect x="8.5" y="10.5" width="5" height="2" fill="#fff" stroke="#8a96b0" stroke-width="1"/></svg>
<svg class="i" style="left:1293px;top:125px;" width="16" height="16" viewBox="0 0 16 16"><rect x="0.5" y="0.5" width="11" height="10" fill="#d8d8d8" stroke="#5a5a5a" stroke-width="1"/><rect x="4.5" y="4.5" width="11" height="11" fill="#f4f7fd" stroke="#3c5a96" stroke-width="1"/><rect x="5" y="5" width="10" height="2" fill="#3a6ad0"/><circle cx="10" cy="11" r="3" fill="#3a8ad8" stroke="#245a9a" stroke-width="0.6"/><path d="M8.500 10C9.500 9 11 9.500 11.500 10.500 11 12 10 12.500 9 13.500" fill="#4ab04a"/></svg>
<svg class="i" style="left:1315px;top:125px;" width="16" height="16" viewBox="0 0 16 16"><circle cx="10" cy="9" r="5.5" fill="#3a8ad8" stroke="#245a9a" stroke-width="0.8"/><path d="M7 6C9 4.500 12 5 13 7 12.500 9.500 10 10 9 13 6.500 12 6 8 7 6Z" fill="#4ab04a"/><path d="M1 2.500L4 0.500 6 2 3.500 4Z" fill="#8a8f98" stroke="#4a4f58" stroke-width="0.6"/><rect x="2" y="4" width="3" height="11" fill="#c82020" stroke="#801010" stroke-width="0.6" rx="1"/></svg>
<div style="left:1184px;top:124px;width:1px;height:19px;background:#8e9bb3;box-shadow:1px 0 0 #d3dae6;"></div>
<div style="left:1235px;top:124px;width:1px;height:19px;background:#8e9bb3;box-shadow:1px 0 0 #d3dae6;"></div>
<div style="left:1286px;top:124px;width:1px;height:19px;background:#8e9bb3;box-shadow:1px 0 0 #d3dae6;"></div>
<div style="left:1155px;top:146px;width:205px;height:273px;background:#ffffff;"></div>
<div style="left:1343px;top:146px;width:17px;height:256px;background:#f0f0f0;"></div>
<div style="left:1155px;top:402px;width:205px;height:17px;background:#f0f0f0;"></div>
<div style="left:1351px;top:237px;width:2px;height:146px;background:#8a8a8a;border-radius:1px;"></div>
<div style="left:1173px;top:409px;width:98px;height:2px;background:#8a8a8a;border-radius:1px;"></div>
<div style="left:1202px;top:345px;width:115px;height:18px;background:#d9d9d9;border-radius:3px;"></div>
<svg class="i" style="left:1182.5px;top:152px;" width="6" height="10" viewBox="0 0 6 10"><path d="M0.800 0.500L5 5 0.800 9.500" stroke="#8a8a8a" stroke-width="1.500" fill="none"/></svg>
<svg class="i" style="left:1204px;top:149px;" width="16" height="14" viewBox="0 0 16 14"><defs><linearGradient id="fg" x1="0" y1="0" x2="0" y2="1"><stop offset="0" stop-color="#fdeeb0"/><stop offset="1" stop-color="#e6b63c"/></linearGradient></defs><path d="M0.500 13.500V1.500H6L7.500 3.500H14.500V13.500Z" fill="url(#fg)" stroke="#a8852a"/></svg>
<span class="tr" style="left:1224.5px;top:148px;letter-spacing:0.04px;">images</span>
<svg class="i" style="left:1182.5px;top:170px;" width="6" height="10" viewBox="0 0 6 10"><path d="M0.800 0.500L5 5 0.800 9.500" stroke="#8a8a8a" stroke-width="1.500" fill="none"/></svg>
<svg class="i" style="left:1206px;top:166px;" width="14" height="14" viewBox="0 0 14 14"><defs><linearGradient id="ag" x1="0" y1="0" x2="1" y2="1"><stop offset="0" stop-color="#fffde0"/><stop offset="1" stop-color="#fdf0a0"/></linearGradient></defs><rect x="0.500" y="0.500" width="13" height="13" fill="url(#ag)" stroke="#7c8aa8"/><path d="M2 3.500H11" stroke="#3a6ad8" stroke-width="1"/><rect x="2" y="2" width="2" height="1" fill="#e03020"/><path d="M2 5.500H4M2 7.500H4M2 9.500H4M2 11.500H4" stroke="#7a86a8" stroke-width="1"/><path d="M5.500 4V12" stroke="#9aa4c0" stroke-width="1"/><path d="M7 5.500H11M7 7.500H10M7 9.500H11M7 11.500H10" stroke="#4a5a8a" stroke-width="1.200"/></svg>
<span class="tr" style="left:1224.8px;top:166px;letter-spacing:0.12px;">admin-login.aspx</span>
<svg class="i" style="left:1181px;top:189px;" width="10" height="6" viewBox="0 0 10 6"><path d="M0.500 1L5 5 9.500 1" stroke="#222" stroke-width="1.500" fill="none"/></svg>
<svg class="i" style="left:1206px;top:184px;" width="14" height="14" viewBox="0 0 14 14"><defs><linearGradient id="ag" x1="0" y1="0" x2="1" y2="1"><stop offset="0" stop-color="#fffde0"/><stop offset="1" stop-color="#fdf0a0"/></linearGradient></defs><rect x="0.500" y="0.500" width="13" height="13" fill="url(#ag)" stroke="#7c8aa8"/><path d="M2 3.500H11" stroke="#3a6ad8" stroke-width="1"/><rect x="2" y="2" width="2" height="1" fill="#e03020"/><path d="M2 5.500H4M2 7.500H4M2 9.500H4M2 11.500H4" stroke="#7a86a8" stroke-width="1"/><path d="M5.500 4V12" stroke="#9aa4c0" stroke-width="1"/><path d="M7 5.500H11M7 7.500H10M7 9.500H11M7 11.500H10" stroke="#4a5a8a" stroke-width="1.200"/></svg>
<span class="tr" style="left:1224.8px;top:184px;letter-spacing:-0.17px;">ajax demo.aspx</span>
<svg class="i" style="left:1224px;top:203px;" width="14" height="15" viewBox="0 0 14 15"><path d="M4.500 2.500H10L13.500 6V14.500H4.500Z" fill="#f4f6fa" stroke="#4a5468"/><path d="M6 8.500H12M6 10.500H12M6 12.500H11" stroke="#7a869c"/><path d="M0.500 1C1 4 2.500 6 6 6.500M6 6.500L3.500 4M6 6.500L3.500 8.500" stroke="#2a62c8" stroke-width="1.400" fill="none"/></svg>
<span class="tr" style="left:1243.8px;top:202px;letter-spacing:-0.19px;">ajax demo.aspx.cs</span>
<svg class="i" style="left:1181px;top:225px;" width="10" height="6" viewBox="0 0 10 6"><path d="M0.500 1L5 5 9.500 1" stroke="#222" stroke-width="1.500" fill="none"/></svg>
<svg class="i" style="left:1206px;top:220px;" width="14" height="14" viewBox="0 0 14 14"><defs><linearGradient id="ag" x1="0" y1="0" x2="1" y2="1"><stop offset="0" stop-color="#fffde0"/><stop offset="1" stop-color="#fdf0a0"/></linearGradient></defs><rect x="0.500" y="0.500" width="13" height="13" fill="url(#ag)" stroke="#7c8aa8"/><path d="M2 3.500H11" stroke="#3a6ad8" stroke-width="1"/><rect x="2" y="2" width="2" height="1" fill="#e03020"/><path d="M2 5.500H4M2 7.500H4M2 9.500H4M2 11.500H4" stroke="#7a86a8" stroke-width="1"/><path d="M5.500 4V12" stroke="#9aa4c0" stroke-width="1"/><path d="M7 5.500H11M7 7.500H10M7 9.500H11M7 11.500H10" stroke="#4a5a8a" stroke-width="1.200"/></svg>
<span class="tr" style="left:1224.4px;top:220px;letter-spacing:-0.16px;">Default.aspx</span>
<svg class="i" style="left:1224px;top:239px;" width="14" height="15" viewBox="0 0 14 15"><path d="M4.500 2.500H10L13.500 6V14.500H4.500Z" fill="#f4f6fa" stroke="#4a5468"/><path d="M6 8.500H12M6 10.500H12M6 12.500H11" stroke="#7a869c"/><path d="M0.500 1C1 4 2.500 6 6 6.500M6 6.500L3.500 4M6 6.500L3.500 8.500" stroke="#2a62c8" stroke-width="1.400" fill="none"/></svg>
<span class="tr" style="left:1243.4px;top:238px;letter-spacing:-0.17px;">Default.aspx.cs</span>
<svg class="i" style="left:1182.5px;top:260px;" width="6" height="10" viewBox="0 0 6 10"><path d="M0.800 0.500L5 5 0.800 9.500" stroke="#8a8a8a" stroke-width="1.500" fill="none"/></svg>
<svg class="i" style="left:1206px;top:256px;" width="14" height="14" viewBox="0 0 14 14"><defs><linearGradient id="ag" x1="0" y1="0" x2="1" y2="1"><stop offset="0" stop-color="#fffde0"/><stop offset="1" stop-color="#fdf0a0"/></linearGradient></defs><rect x="0.500" y="0.500" width="13" height="13" fill="url(#ag)" stroke="#7c8aa8"/><path d="M2 3.500H11" stroke="#3a6ad8" stroke-width="1"/><rect x="2" y="2" width="2" height="1" fill="#e03020"/><path d="M2 5.500H4M2 7.500H4M2 9.500H4M2 11.500H4" stroke="#7a86a8" stroke-width="1"/><path d="M5.500 4V12" stroke="#9aa4c0" stroke-width="1"/><path d="M7 5.500H11M7 7.500H10M7 9.500H11M7 11.500H10" stroke="#4a5a8a" stroke-width="1.200"/></svg>
<span class="tr" style="left:1224.4px;top:256px;letter-spacing:-0.19px;">Default2.aspx</span>
<svg class="i" style="left:1182.5px;top:278px;" width="6" height="10" viewBox="0 0 6 10"><path d="M0.800 0.500L5 5 0.800 9.500" stroke="#8a8a8a" stroke-width="1.500" fill="none"/></svg>
<svg class="i" style="left:1206px;top:274px;" width="14" height="14" viewBox="0 0 14 14"><defs><linearGradient id="ag" x1="0" y1="0" x2="1" y2="1"><stop offset="0" stop-color="#fffde0"/><stop offset="1" stop-color="#fdf0a0"/></linearGradient></defs><rect x="0.500" y="0.500" width="13" height="13" fill="url(#ag)" stroke="#7c8aa8"/><path d="M2 3.500H11" stroke="#3a6ad8" stroke-width="1"/><rect x="2" y="2" width="2" height="1" fill="#e03020"/><path d="M2 5.500H4M2 7.500H4M2 9.500H4M2 11.500H4" stroke="#7a86a8" stroke-width="1"/><path d="M5.500 4V12" stroke="#9aa4c0" stroke-width="1"/><path d="M7 5.500H11M7 7.500H10M7 9.500H11M7 11.500H10" stroke="#4a5a8a" stroke-width="1.200"/></svg>
<span class="tr" style="left:1224.5px;top:274px;letter-spacing:-0.08px;">home.aspx</span>
<svg class="i" style="left:1182.5px;top:296px;" width="6" height="10" viewBox="0 0 6 10"><path d="M0.800 0.500L5 5 0.800 9.500" stroke="#8a8a8a" stroke-width="1.500" fill="none"/></svg>
<svg class="i" style="left:1204px;top:293px;" width="16" height="14" viewBox="0 0 16 14"><rect x="0.500" y="0.500" width="14" height="13" fill="#f8f9fd" stroke="#5a6e96"/><rect x="1" y="1" width="13" height="3" fill="#4c8ae0"/><rect x="1" y="4" width="3" height="9" fill="#f8e27a"/></svg>
<span class="tr" style="left:1224.4px;top:292px;letter-spacing:-0.18px;">MasterPage.master</span>
<svg class="i" style="left:1182.5px;top:314px;" width="6" height="10" viewBox="0 0 6 10"><path d="M0.800 0.500L5 5 0.800 9.500" stroke="#8a8a8a" stroke-width="1.500" fill="none"/></svg>
<svg class="i" style="left:1206px;top:310px;" width="14" height="14" viewBox="0 0 14 14"><defs><linearGradient id="ag" x1="0" y1="0" x2="1" y2="1"><stop offset="0" stop-color="#fffde0"/><stop offset="1" stop-color="#fdf0a0"/></linearGradient></defs><rect x="0.500" y="0.500" width="13" height="13" fill="url(#ag)" stroke="#7c8aa8"/><path d="M2 3.500H11" stroke="#3a6ad8" stroke-width="1"/><rect x="2" y="2" width="2" height="1" fill="#e03020"/><path d="M2 5.500H4M2 7.500H4M2 9.500H4M2 11.500H4" stroke="#7a86a8" stroke-width="1"/><path d="M5.500 4V12" stroke="#9aa4c0" stroke-width="1"/><path d="M7 5.500H11M7 7.500H10M7 9.500H11M7 11.500H10" stroke="#4a5a8a" stroke-width="1.200"/></svg>
<span class="tr" style="left:1225.0px;top:310px;letter-spacing:-0.17px;">signup.aspx</span>
<svg class="i" style="left:1204px;top:328px;" width="15" height="16" viewBox="0 0 15 16"><path d="M4.500 1.500H11L14.500 5V14.500H4.500Z" fill="#f4f6fa" stroke="#6a7488"/><path d="M11 7.500H13M11 10H13M11 12.500H13" stroke="#4a78d0"/><text x="0" y="12" font-family="Liberation Serif,serif" font-weight="bold" font-size="13" fill="#8a1c1c">A</text></svg>
<span class="tr" style="left:1224.8px;top:328px;letter-spacing:-0.45px;">StyleSheet.css</span>
<svg class="i" style="left:1182.5px;top:350px;" width="6" height="10" viewBox="0 0 6 10"><path d="M0.800 0.500L5 5 0.800 9.500" stroke="#8a8a8a" stroke-width="1.500" fill="none"/></svg>
<svg class="i" style="left:1206px;top:346px;" width="14" height="14" viewBox="0 0 14 14"><defs><linearGradient id="ag" x1="0" y1="0" x2="1" y2="1"><stop offset="0" stop-color="#fffde0"/><stop offset="1" stop-color="#fdf0a0"/></linearGradient></defs><rect x="0.500" y="0.500" width="13" height="13" fill="url(#ag)" stroke="#7c8aa8"/><path d="M2 3.500H11" stroke="#3a6ad8" stroke-width="1"/><rect x="2" y="2" width="2" height="1" fill="#e03020"/><path d="M2 5.500H4M2 7.500H4M2 9.500H4M2 11.500H4" stroke="#7a86a8" stroke-width="1"/><path d="M5.500 4V12" stroke="#9aa4c0" stroke-width="1"/><path d="M7 5.500H11M7 7.500H10M7 9.500H11M7 11.500H10" stroke="#4a5a8a" stroke-width="1.200"/></svg>
<span class="tr" style="left:1224.5px;top:346px;letter-spacing:-0.06px;">user-profile.aspx</span>
<svg class="i" style="left:1182.5px;top:368px;" width="6" height="10" viewBox="0 0 6 10"><path d="M0.800 0.500L5 5 0.800 9.500" stroke="#8a8a8a" stroke-width="1.500" fill="none"/></svg>
<svg class="i" style="left:1206px;top:364px;" width="14" height="14" viewBox="0 0 14 14"><defs><linearGradient id="ag" x1="0" y1="0" x2="1" y2="1"><stop offset="0" stop-color="#fffde0"/><stop offset="1" stop-color="#fdf0a0"/></linearGradient></defs><rect x="0.500" y="0.500" width="13" height="13" fill="url(#ag)" stroke="#7c8aa8"/><path d="M2 3.500H11" stroke="#3a6ad8" stroke-width="1"/><rect x="2" y="2" width="2" height="1" fill="#e03020"/><path d="M2 5.500H4M2 7.500H4M2 9.500H4M2 11.500H4" stroke="#7a86a8" stroke-width="1"/><path d="M5.500 4V12" stroke="#9aa4c0" stroke-width="1"/><path d="M7 5.500H11M7 7.500H10M7 9.500H11M7 11.500H10" stroke="#4a5a8a" stroke-width="1.200"/></svg>
<span class="tr" style="left:1224.5px;top:364px;letter-spacing:-0.12px;">userlogin.aspx</span>
<svg class="i" style="left:1204px;top:382px;" width="16" height="16" viewBox="0 0 16 16"><path d="M1.500 0.500H8L11.500 4V14.500H1.500Z" fill="#f4f6fa" stroke="#6a7488"/><path d="M3 5.500H9M3 7.500H9M3 9.500H8M3 11.500H7" stroke="#4a78d0"/><circle cx="11.500" cy="11.500" r="3.500" fill="#3a8ad8" stroke="#245a9a" stroke-width="0.600"/><path d="M9.500 10C10.500 9 12 9.500 12.500 10.500 12 12 11 12.500 10 14" fill="#4ab04a"/></svg>
<span class="tr" style="left:1225.4px;top:382px;letter-spacing:0.15px;">web.config</span>
<div style="left:1155px;top:419px;width:69px;height:20px;background:#ffffff;border-radius:0 0 3px 3px;"></div>
<svg class="i" style="left:1160px;top:421px;" width="16" height="16" viewBox="0 0 16 16"><rect x="4.5" y="0.5" width="11" height="10" fill="#eef2fc" stroke="#3c5a96" stroke-width="1"/><rect x="5" y="1" width="10" height="2" fill="#4c84e0"/><path d="M0.500 9.500V4.500H3.500L4.500 5.500H7.500V9.500Z" fill="#f3c649" stroke="#a87b1d" stroke-width="1"/><circle cx="8.5" cy="9.5" r="3.3" fill="#d8f0ff" stroke="#7a98c0" stroke-width="1.2"/><path d="M11 12L14.500 15.500" fill="none" stroke="#d89a28" stroke-width="2.2"/></svg>
<span class="tr" style="left:1179.9px;top:422px;letter-spacing:-0.11px;">Solut...</span>
<svg class="i" style="left:1228px;top:421px;" width="16" height="16" viewBox="0 0 16 16"><rect x="0.5" y="1.5" width="13" height="11" fill="#f6f8fd" stroke="#3c5a96" stroke-width="1"/><rect x="1" y="2" width="12" height="2" fill="#6a9ae8"/><rect x="6" y="9" width="2.5" height="6" fill="#2a6ae0"/><circle cx="7.2" cy="7.5" r="1.5" fill="#2a6ae0"/><rect x="9" y="8" width="2.5" height="6" fill="#f0a020"/><circle cx="10.2" cy="6.5" r="1.5" fill="#f0a020"/><rect x="11.5" y="10" width="2.5" height="6" fill="#2aa02a"/><circle cx="12.7" cy="8.5" r="1.5" fill="#2aa02a"/><rect x="14" y="9" width="2" height="6" fill="#e03030"/><circle cx="15" cy="7.5" r="1.4" fill="#e03030"/></svg>
<span class="pt" style="left:1249.2px;top:422px;letter-spacing:-0.50px;">Team...</span>
<svg class="i" style="left:1297px;top:421px;" width="16" height="16" viewBox="0 0 16 16"><rect x="0.5" y="4.5" width="15" height="10" fill="#f7f9fd" stroke="#3c5078" stroke-width="1"/><rect x="1" y="5" width="14" height="2" fill="#6a9ae8"/><path d="M2 9.500H6M2 11.500H5" fill="none" stroke="#7a8bb0" stroke-width="1"/><path d="M3 7L6 4 9 7 6 10Z" fill="#f0c040" stroke="#a07818" stroke-width="0.6"/><path d="M9 3L11 0.500 13.500 3 11.500 5.500Z" fill="#4a9ae8" stroke="#2a5ab0" stroke-width="0.6"/><path d="M9 10L12 6.500 15 9.500 12 13Z" fill="#e868e0" stroke="#9030a0" stroke-width="0.6"/></svg>
<span class="pt" style="left:1316.7px;top:422px;letter-spacing:-0.48px;">Class...</span>
<div style="left:1155px;top:445px;width:205px;height:19px;background:#4d6082;border-radius:3px 3px 0 0;background:linear-gradient(#51648a,#465a7e);"></div>
<span class="pt" style="left:1157.5px;top:447px;letter-spacing:-0.21px;">Properties</span>
<svg class="i" style="left:1316px;top:453px;" width="8" height="4" viewBox="0 0 8 4"><path d="M0 0H8L4 4Z" fill="#d6dbe5"/></svg>
<svg class="i" style="left:1332px;top:449px;" width="7" height="12" viewBox="0 0 7 12"><path d="M1.500 0.500H5.500M1.500 0.500V6.500M5.500 0.500V6.500M4.500 0.500V6.500M0 6.500H7M3.500 7V11.500" stroke="#e3e7ee" stroke-width="1" fill="none"/></svg>
<svg class="i" style="left:1347px;top:450px;" width="9" height="9" viewBox="0 0 9 9"><path d="M0.500 0.500L8.500 8.500M8.500 0.500L0.500 8.500" stroke="#e3e7ee" stroke-width="1.500" fill="none"/></svg>
<div style="left:1155px;top:464px;width:205px;height:28px;background:#f0f2f8;"></div>
<div style="left:1156px;top:466px;width:203px;height:24px;background:#ffffff;"></div>
<div style="left:1345px;top:468px;width:11px;height:21px;background:#f0f0f0;"></div>
<svg class="i" style="left:1347px;top:477px;" width="7" height="4" viewBox="0 0 7 4"><path d="M0.300 0H6.700L3.500 3.600Z" fill="#000"/></svg>
<span class="pg b" style="left:1159.8px;top:471px;letter-spacing:-0.27px;">lblAccountStatus</span>
<span class="pg" style="left:1262.5px;top:471px;letter-spacing:-0.65px;">&lt;LABEL&gt;</span>
<div style="left:1155px;top:492px;width:205px;height:26px;background:#bcc7d8;"></div>
<div style="left:1158px;top:494px;width:23px;height:22px;background:#ffe8a6;border:1px solid #e5c365;border-radius:2px;"></div>
<svg class="i" style="left:1161px;top:497px;" width="16" height="16" viewBox="0 0 16 16"><rect x="1.5" y="1.5" width="5" height="5" fill="#fff" stroke="#3a5a9a" stroke-width="1"/><path d="M2.500 4H5.500M4 2.500V5.500" fill="none" stroke="#1a2a5a" stroke-width="1"/><rect x="1.5" y="9.5" width="5" height="5" fill="#fff" stroke="#3a5a9a" stroke-width="1"/><path d="M2.500 12H5.500M4 10.500V13.500" fill="none" stroke="#1a2a5a" stroke-width="1"/><path d="M8 3H14M8 5H12M8 7H14M8 11H14M8 13H12" fill="none" stroke="#5a5a5a" stroke-width="1" stroke-dasharray="2 1"/></svg>
<svg class="i" style="left:1184px;top:497px;" width="16" height="16" viewBox="0 0 16 16"><path d="M12.500 1V14M10 11.500L12.500 14.500 15 11.500" fill="none" stroke="#000" stroke-width="1.2"/><text x="1" y="7" font-family="Liberation Serif,serif" font-weight="bold" font-size="8" fill="#2a4ab8">A</text><text x="1" y="15" font-family="Liberation Serif,serif" font-weight="bold" font-size="8" fill="#a02828">Z</text></svg>
<svg class="i" style="left:1213px;top:497px;" width="16" height="16" viewBox="0 0 16 16"><rect x="0.5" y="2.5" width="15" height="12" fill="#c8ccd2" stroke="#9a9ea6" stroke-width="1"/><rect x="1" y="3" width="14" height="2" fill="#b0b4ba"/><rect x="3.5" y="7.5" width="9" height="4" fill="#d8dce0" stroke="#9a9ea6" stroke-width="1"/><path d="M5 9.500H11" fill="none" stroke="#8a8e96" stroke-width="1"/></svg>
<div style="left:1207px;top:495px;width:1px;height:20px;background:#8e9bb3;box-shadow:1px 0 0 #d3dae6;"></div>
<div style="left:1155px;top:518px;width:205px;height:1px;background:#8a8f9a;"></div>
<div style="left:1155px;top:519px;width:205px;height:110px;background:#f0f0f0;"></div>
<svg class="i" style="left:1160px;top:525px;" width="10" height="6" viewBox="0 0 10 6"><path d="M0.500 1L5 5 9.500 1" stroke="#222" stroke-width="1.500" fill="none"/></svg>
<span class="pg b" style="left:1180.7px;top:521px;letter-spacing:-0.40px;color:#a7b0c2;">Layout</span>
<div style="left:1177px;top:538px;width:63px;height:18px;background:#ffffff;"></div>
<div style="left:1241px;top:538px;width:101px;height:18px;background:#ffffff;"></div>
<span class="pg" style="left:1180.5px;top:540px;letter-spacing:0.33px;">Height</span>
<div style="left:1177px;top:557px;width:63px;height:18px;background:#ffffff;"></div>
<div style="left:1241px;top:557px;width:101px;height:18px;background:#ffffff;"></div>
<span class="pg" style="left:1181.4px;top:559px;letter-spacing:0.32px;">Width</span>
<svg class="i" style="left:1160px;top:582px;" width="10" height="6" viewBox="0 0 10 6"><path d="M0.500 1L5 5 9.500 1" stroke="#222" stroke-width="1.500" fill="none"/></svg>
<span class="pg b" style="left:1180.7px;top:578px;letter-spacing:-0.34px;color:#a7b0c2;">Misc</span>
<div style="left:1241px;top:595px;width:101px;height:18px;background:#ffffff;"></div>
<span class="pg" style="left:1180.8px;top:597px;letter-spacing:-0.22px;">(ID)</span>
<span class="pg" style="left:1243.5px;top:597px;letter-spacing:0.10px;">lblAccountStatus</span>
<div style="left:1177px;top:614px;width:63px;height:14px;background:#ffffff;"></div>
<div style="left:1241px;top:614px;width:101px;height:14px;background:#ffffff;"></div>
<span class="pg" style="left:1180.7px;top:616px;letter-spacing:0.15px;">runat</span>
<span class="pg" style="left:1244.0px;top:616px;letter-spacing:-0.42px;">server</span>
<div style="left:1155px;top:628px;width:205px;height:62px;background:#f0f0f0;"></div>
<div style="left:1351px;top:592px;width:2px;height:17px;background:#8a8a8a;border-radius:1px;"></div>
<div style="left:1155px;top:628px;width:205px;height:1px;background:#a0a0a0;"></div>
<div style="left:1155px;top:632px;width:205px;height:1px;background:#a0a0a0;"></div>
<div style="left:1155px;top:633px;width:205px;height:57px;background:#dfe3ec;"></div>
<span class="pg b" style="left:1161.1px;top:635px;letter-spacing:0.40px;">(ID)</span>
<!-- s_bottom -->
<div style="left:0px;top:697px;width:1366px;height:23px;background:#2a3a59;"></div>
<span class="st" style="left:3.8px;top:701px;letter-spacing:-0.27px;">Item(s) Saved</span>
<span class="st" style="left:1011.6px;top:701px;letter-spacing:-0.26px;">Ln 16</span>
<span class="st" style="left:1103.9px;top:701px;letter-spacing:-0.17px;">Col 67</span>
<span class="st" style="left:1196.0px;top:701px;letter-spacing:-0.40px;">Ch 67</span>
<span class="st" style="left:1331.6px;top:701px;letter-spacing:-0.55px;">INS</span>
<div style="left:0px;top:720px;width:1366px;height:48px;background:linear-gradient(90deg,#dfe9f8 0%,#e4eefa 10%,#dde6f9 20%,#d8e0f6 28%,#d7dff4 50%,#d8e0f4 68%,#dfe7f5 75%,#e2ebf7 80%,#e3ecf7 100%);"></div>
<svg class="i" style="left:364px;top:733px;" width="23" height="23" viewBox="0 0 23 23"><defs><linearGradient id="wg" x1="0" y1="0" x2="1" y2="1"><stop offset="0" stop-color="#6fd0fb"/><stop offset="1" stop-color="#1b84dc"/></linearGradient></defs><rect x="0" y="0" width="11" height="11" rx="1" fill="url(#wg)"/><rect x="12" y="0" width="11" height="11" rx="1" fill="url(#wg)"/><rect x="0" y="12" width="11" height="11" rx="1" fill="url(#wg)"/><rect x="12" y="12" width="11" height="11" rx="1" fill="url(#wg)"/></svg>
<svg class="i" style="left:409px;top:733px;" width="23" height="23" viewBox="0 0 23 23"><circle cx="13" cy="9.500" r="7.500" fill="none" stroke="#1c1c1c" stroke-width="2.400"/><path d="M7.500 15L2 21" stroke="#1c1c1c" stroke-width="3" stroke-linecap="round"/></svg>
<svg class="i" style="left:452px;top:733px;" width="24" height="23" viewBox="0 0 24 23"><rect x="0" y="6" width="17" height="16" rx="1.500" fill="#222"/><rect x="6" y="0" width="18" height="16" rx="1.500" fill="#f2f2f2" opacity="0.850"/></svg>
<svg class="i" style="left:496px;top:733px;" width="24" height="23" viewBox="0 0 24 23"><rect x="0" y="0" width="24" height="22" rx="2" fill="#222"/><rect x="2" y="2" width="9" height="18" rx="1" fill="#e8e8e8"/><rect x="13" y="2" width="9" height="8" fill="#4fd0fa"/><rect x="13" y="12" width="9" height="3" fill="#1b84dc"/><rect x="13" y="17" width="9" height="3" fill="#1668c8"/></svg>
<svg class="i" style="left:540px;top:732px;" width="24" height="24" viewBox="0 0 24 24"><circle cx="12" cy="12" r="12" fill="#fbc116"/><path d="M12 12L1.600 6A12 12 0 0 1 22.400 6Z" fill="#e33b2e"/><path d="M12 12L1.600 6A12 12 0 0 0 12 24Z" fill="#2da94f"/><path d="M12 12H24A12 12 0 0 1 12 24Z" fill="#fbc116"/><circle cx="12" cy="12" r="5.500" fill="#fff"/><circle cx="12" cy="12" r="4.300" fill="#4285f4"/></svg>
<div style="left:577px;top:725px;width:38px;height:39px;background:#eaeffb;border-radius:4px;box-shadow:0 0 0 1px #e0e5f2;"></div>
<div style="left:588px;top:760px;width:16px;height:3px;background:#0a6cd6;border-radius:2px;"></div>
<svg class="i" style="left:584px;top:737px;" width="24" height="14" viewBox="0 0 24 14"><defs><linearGradient id="vsg2" x1="0" x2="1"><stop offset="0" stop-color="#1c6ab8"/><stop offset=".5" stop-color="#3a3f9e"/><stop offset="1" stop-color="#7a3fb0"/></linearGradient></defs><path d="M12 7C9.500 4 8 2.500 6 2.500 3.500 2.500 1.800 4.500 1.800 7S3.500 11.500 6 11.500C8 11.500 9.500 10 12 7S16 2.500 18 2.500C20.500 2.500 22.200 4.500 22.200 7S20.500 11.500 18 11.500C16 11.500 14.500 10 12 7Z" fill="none" stroke="url(#vsg2)" stroke-width="2.900"/></svg>
<svg class="i" style="left:628px;top:732px;" width="23" height="23" viewBox="0 0 23 23"><defs><linearGradient id="ew" x1="0" y1="0" x2="0" y2="1"><stop offset="0" stop-color="#c8e6a0"/><stop offset=".6" stop-color="#5cb82c"/><stop offset="1" stop-color="#2e8a1a"/></linearGradient></defs><rect x="0.500" y="0.500" width="22" height="22" rx="1" fill="url(#ew)" stroke="#9a9a9a"/><text x="12" y="21" font-family="Liberation Sans,sans-serif" font-size="14" fill="#fff">4</text></svg>
<svg class="i" style="left:672px;top:733px;" width="24" height="22" viewBox="0 0 24 22"><rect x="6" y="0" width="18" height="22" rx="1.500" fill="#c45ae0"/><rect x="18" y="6" width="6" height="5" fill="#a840c8"/><rect x="18" y="11" width="6" height="5" fill="#9030b0"/><rect x="18" y="16" width="6" height="6" fill="#7a1a9a"/><rect x="0" y="5" width="13" height="13" rx="1" fill="#7a1a9a"/><text x="2.500" y="16" font-family="Liberation Sans,sans-serif" font-weight="bold" font-size="11" fill="#fff">N</text></svg>
<svg class="i" style="left:717px;top:735px;" width="22" height="20" viewBox="0 0 22 20"><defs><linearGradient id="mg" x1="0" y1="0" x2="0" y2="1"><stop offset="0" stop-color="#3cc8e0"/><stop offset="1" stop-color="#1a98b8"/></linearGradient></defs><rect x="0.500" y="0.500" width="21" height="14" rx="1" fill="url(#mg)" stroke="#6a7078"/><rect x="9" y="15" width="4" height="2" fill="#8a8a8a"/><rect x="6" y="17" width="10" height="2" fill="#5a5a5a"/></svg>
<svg class="i" style="left:760px;top:735px;" width="24" height="22" viewBox="0 0 24 22"><rect x="6" y="0" width="18" height="13" rx="2" fill="#1a8ae0"/><rect x="0" y="5" width="18" height="13" rx="2" fill="#0a4a9a"/><rect x="6" y="5" width="12" height="8" rx="1" fill="#4cc8f4"/><rect x="8" y="18" width="2" height="2" fill="#8a8a8a"/><rect x="6" y="20" width="6" height="1" fill="#8a8a8a"/></svg>
<svg class="i" style="left:804px;top:733px;" width="24" height="22" viewBox="0 0 24 22"><circle cx="13" cy="11" r="11" fill="#ed6c47"/><path d="M13 0A11 11 0 0 1 24 11H13Z" fill="#ff8f6b"/><path d="M13 22A11 11 0 0 0 24 11H13Z" fill="#d35230"/><rect x="0" y="5" width="12" height="12" rx="1" fill="#c43e1c"/><text x="2.500" y="15" font-family="Liberation Sans,sans-serif" font-weight="bold" font-size="11" fill="#fff">P</text></svg>
<svg class="i" style="left:848px;top:727px;" width="30" height="28" viewBox="0 0 30 28"><path d="M0 17L5 12 10 17 5 22Z" fill="#2560c8"/><path d="M5 22L19 8 24 13 10 27Z" fill="#3d9bf0"/><circle cx="21" cy="8" r="8" fill="#0a78d8"/><text x="21" y="12.500" text-anchor="middle" font-family="Liberation Sans,sans-serif" font-size="11" fill="#fff">2</text></svg>
<svg class="i" style="left:893px;top:735px;" width="19" height="17" viewBox="0 0 19 17"><rect x="4" y="0" width="15" height="17" rx="1.500" fill="#94b81e"/><path d="M0 10L7 8.500 8 4 11 8 16 7 12.500 11 14 15 9.500 13 5 15 6.500 11Z" fill="#fff"/></svg>
<svg class="i" style="left:938px;top:732px;" width="22" height="24" viewBox="0 0 22 24"><path d="M0 2L7 0V22L0 24Z" fill="#6cc040"/><rect x="7" y="3" width="9" height="17" fill="#e8e8e8" stroke="#a0a0a0" stroke-width="0.600"/><path d="M16 6C19 10 20 14 18 19H14C12 14 13 10 16 6Z" fill="#d8a020"/><rect x="12" y="19" width="9" height="4" rx="1" fill="#222"/><path d="M0 24L4 20" stroke="#3a7ad8" stroke-width="1.200"/></svg>
<div style="left:945px;top:760px;width:6px;height:2px;background:#8a8a8a;border-radius:1px;"></div>
<svg class="i" style="left:980px;top:732px;" width="24" height="24" viewBox="0 0 24 24"><circle cx="12" cy="12" r="12" fill="#fbc116"/><path d="M12 12L1.600 6A12 12 0 0 1 22.400 6Z" fill="#e33b2e"/><path d="M12 12L1.600 6A12 12 0 0 0 12 24Z" fill="#2da94f"/><path d="M12 12H24A12 12 0 0 1 12 24Z" fill="#fbc116"/><circle cx="12" cy="12" r="5.500" fill="#fff"/><circle cx="12" cy="12" r="4.300" fill="#4285f4"/></svg>
<svg class="i" style="left:994px;top:726px;" width="16" height="30" viewBox="0 0 16 30"><path d="M3 2L8 6 13 2M8 0V8M2 8H14" stroke="#2a9a3a" stroke-width="1.600" fill="none"/><path d="M9 3L14 6M11 10L15 6" stroke="#2a50d8" stroke-width="1.600" fill="none"/><path d="M2 8L6 11 11 9" stroke="#e03020" stroke-width="1.800" fill="none"/><path d="M8 18L10 22 14 22.500 11 25 12 29 8 27 4 29 5 25 2 22.500 6 22Z" fill="#f8c820"/><path d="M2 28L7 24" stroke="#2a50d8" stroke-width="1.600"/></svg>
<div style="left:989px;top:760px;width:6px;height:2px;background:#8a8a8a;border-radius:1px;"></div>
<svg class="i" style="left:1094px;top:740px;" width="12" height="8" viewBox="0 0 12 8"><path d="M0.800 7L6 1.500 11.200 7" stroke="#1a1a1a" stroke-width="1.400" fill="none"/></svg>
<svg class="i" style="left:1116px;top:738px;" width="17" height="12" viewBox="0 0 17 12"><rect x="5.500" y="2.500" width="10" height="7" rx="1.500" fill="none" stroke="#1a1a1a" stroke-width="1.200"/><path d="M16 5V7.500" stroke="#1a1a1a" stroke-width="1.200"/><path d="M2.500 0V2.500M0.800 2.500H4.200V5A1.700 1.700 0 0 1 0.800 5ZM2.500 6.500V11" stroke="#1a1a1a" stroke-width="1.100" fill="none"/></svg>
<svg class="i" style="left:1140px;top:739px;" width="17" height="11" viewBox="0 0 17 11"><path d="M4 10.500A3.500 3.500 0 0 1 4 3.500 5 5 0 0 1 12.500 4 3.500 3.500 0 0 1 13 10.500Z" fill="#1a8ae8"/><path d="M4 10.500A3.500 3.500 0 0 1 3 4L13 10.500Z" fill="#0a5ab8"/></svg>
<svg class="i" style="left:1164px;top:738px;" width="18" height="14" viewBox="0 0 18 14"><path d="M4 10.500A3.500 3.500 0 0 1 4 3.500 5 5 0 0 1 12.500 4 3.500 3.500 0 0 1 13 10.500Z" fill="#8a8a8a" stroke="#4a4a4a"/><circle cx="12.500" cy="9.500" r="4" fill="#e81123"/><path d="M10.800 7.800L14.200 11.200M14.200 7.800L10.800 11.200" stroke="#fff" stroke-width="1.200"/></svg>
<svg class="i" style="left:1190px;top:738px;" width="14" height="13" viewBox="0 0 14 13"><path d="M1.500 11.500A10 10 0 0 1 11.500 1.500" stroke="#1a1a1a" stroke-width="1.200" fill="none"/><path d="M4.500 11.500A7 7 0 0 1 11.500 4.500" stroke="#1a1a1a" stroke-width="1.200" fill="none"/><path d="M7.500 11.500A4 4 0 0 1 11.500 7.500" stroke="#1a1a1a" stroke-width="1.200" fill="none"/><circle cx="11" cy="11" r="1.500" fill="#1a1a1a"/></svg>
<svg class="i" style="left:1215px;top:736px;" width="17" height="16" viewBox="0 0 17 16"><path d="M11 1.500L14 4 7 12.500 4 10Z" fill="none" stroke="#1a1a1a" stroke-width="1.200"/><path d="M4.500 9C1 9 0 14 3.500 14.500S7 11 9 10.500 15 11 16 8" fill="none" stroke="#1a1a1a" stroke-width="1.200"/></svg>
<span class="ck" style="left:1262.9px;top:720px;letter-spacing:-0.64px;">12:08</span>
<span class="ck" style="left:1259.6px;top:736px;letter-spacing:-0.22px;">Friday</span>
<span class="ck" style="left:1246.5px;top:752px;letter-spacing:-0.33px;">25-08-2023</span>
<svg class="i" style="left:1325px;top:736px;" width="24" height="24" viewBox="0 0 24 24"><path d="M0 0H16V12H9.500L7 14.500 4.500 12H0Z" fill="#0c0c0c"/><path d="M3 4.600H13M3 7.300H13M3 10H10" stroke="#f0f4fa" stroke-width="1"/><circle cx="15.500" cy="15.300" r="7.700" fill="#d4d4d4" stroke="#909090"/><text x="15.500" y="19.300" text-anchor="middle" font-family="Liberation Sans,sans-serif" font-size="11" fill="#222">3</text></svg>
<div style="left:1361px;top:720px;width:1px;height:48px;background:#bcc3d0;"></div>
</body>
</html>
